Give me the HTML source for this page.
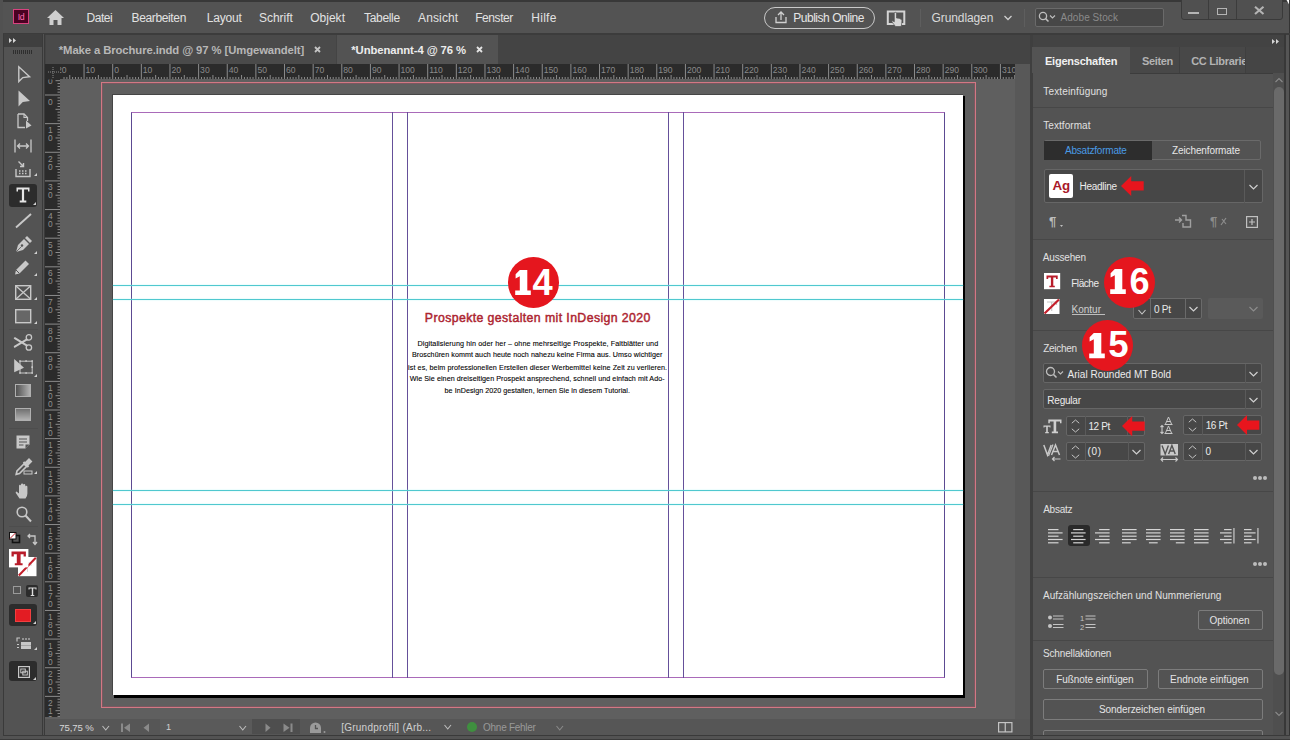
<!DOCTYPE html>
<html><head><meta charset="utf-8"><style>
html,body{margin:0;padding:0;}
body{width:1292px;height:740px;overflow:hidden;position:relative;background:#ffffff;font-family:"Liberation Sans",sans-serif;}
.r{position:absolute;}
.t{position:absolute;white-space:nowrap;}
svg.r{overflow:visible;}
</style></head><body>
<div class="r" style="left:0px;top:0px;width:1290px;height:740px;background:#535353;"></div>
<div class="r" style="left:0px;top:0px;width:1290px;height:2px;background:#383838;"></div>
<div class="r" style="left:0px;top:0px;width:3px;height:740px;background:#515151;"></div>
<div class="r" style="left:13px;top:9px;width:16px;height:15px;background:#4a0222;border:1px solid #d8427f;box-sizing:border-box;"></div>
<div class="t" style="left:17.80px;top:13.22px;font-size:8.78px;line-height:8.78px;color:#ff6fb0;font-weight:400;letter-spacing:-0.600px;">Id</div>
<svg class="r" style="left:46px;top:9px;" width="19" height="17" viewBox="0 0 19 17"><path d="M9.5 1 L18 9 L15.5 9 L15.5 16 L11.5 16 L11.5 11 L7.5 11 L7.5 16 L3.5 16 L3.5 9 L1 9 Z" fill="#cfcfcf"/></svg>
<div class="t" style="left:86.60px;top:11.69px;font-size:12px;line-height:12px;color:#e2e2e2;font-weight:400;letter-spacing:-0.500px;">Datei</div>
<div class="t" style="left:131.50px;top:11.69px;font-size:12px;line-height:12px;color:#e2e2e2;font-weight:400;letter-spacing:-0.356px;">Bearbeiten</div>
<div class="t" style="left:206.80px;top:11.69px;font-size:12px;line-height:12px;color:#e2e2e2;font-weight:400;letter-spacing:-0.220px;">Layout</div>
<div class="t" style="left:259.10px;top:11.69px;font-size:12px;line-height:12px;color:#e2e2e2;font-weight:400;letter-spacing:-0.050px;">Schrift</div>
<div class="t" style="left:310.20px;top:11.69px;font-size:12px;line-height:12px;color:#e2e2e2;font-weight:400;letter-spacing:0.020px;">Objekt</div>
<div class="t" style="left:364.00px;top:11.69px;font-size:12px;line-height:12px;color:#e2e2e2;font-weight:400;letter-spacing:-0.317px;">Tabelle</div>
<div class="t" style="left:418.00px;top:11.69px;font-size:12px;line-height:12px;color:#e2e2e2;font-weight:400;letter-spacing:0.133px;">Ansicht</div>
<div class="t" style="left:475.20px;top:11.69px;font-size:12px;line-height:12px;color:#e2e2e2;font-weight:400;letter-spacing:-0.433px;">Fenster</div>
<div class="t" style="left:531.30px;top:11.69px;font-size:12px;line-height:12px;color:#e2e2e2;font-weight:400;letter-spacing:0.250px;">Hilfe</div>
<div class="r" style="left:763.5px;top:6.5px;width:111.5px;height:22.0px;background:transparent;border:1px solid #c9c9c9;border-radius:11px;box-sizing:border-box;"></div>
<svg class="r" style="left:774px;top:10px;" width="14" height="14" viewBox="0 0 14 14"><path d="M2 7 V12.5 H12 V7" fill="none" stroke="#d0d0d0" stroke-width="1.3"/><path d="M7 10 V2.5 M4 5 L7 2 L10 5" fill="none" stroke="#d0d0d0" stroke-width="1.3"/></svg>
<div class="t" style="left:793.20px;top:11.69px;font-size:12px;line-height:12px;color:#e6e6e6;font-weight:400;letter-spacing:-0.469px;">Publish Online</div>
<svg class="r" style="left:886px;top:9.5px;" width="20" height="17" viewBox="0 0 20 17"><rect x="1.8" y="1.5" width="16.5" height="12.5" fill="none" stroke="#d4d4d4" stroke-width="2"/><path d="M9.5 16.5 L6 12 Q5.6 11 6.6 10.8 L8.3 11.8 V3.5 Q8.3 2.3 9.4 2.3 Q10.5 2.3 10.5 3.5 V8 Q13.5 8 15.2 9.3 Q16.2 10 15.9 12 L15.2 16.5 Z" fill="#d6d6d6" stroke="#535353" stroke-width="0.7"/></svg>
<div class="r" style="left:920px;top:9px;width:1px;height:18px;background:#5e5e5e;"></div>
<div class="t" style="left:931.60px;top:11.69px;font-size:12px;line-height:12px;color:#dadada;font-weight:400;letter-spacing:-0.111px;">Grundlagen</div>
<svg class="r" style="left:1003px;top:14px;" width="10" height="8" viewBox="0 0 10 8"><path d="M1.5 2 L5 5.5 L8.5 2" fill="none" stroke="#cfcfcf" stroke-width="1.3"/></svg>
<div class="r" style="left:1024px;top:9px;width:1px;height:18px;background:#5e5e5e;"></div>
<div class="r" style="left:1034.5px;top:7.5px;width:129.0px;height:19.0px;background:#474747;border:1px solid #6a6a6a;border-radius:2px;box-sizing:border-box;"></div>
<svg class="r" style="left:1038px;top:11px;" width="22" height="12" viewBox="0 0 22 12"><circle cx="5" cy="5" r="3.6" fill="none" stroke="#bfbfbf" stroke-width="1.3"/><path d="M7.6 7.6 L10.5 10.5" stroke="#bfbfbf" stroke-width="1.5"/><path d="M12 4.5 L14.5 7 L17 4.5" fill="none" stroke="#bfbfbf" stroke-width="1.1"/></svg>
<div class="t" style="left:1060.50px;top:12.88px;font-size:10px;line-height:10px;color:#8a8a8a;font-weight:400;letter-spacing:0.070px;">Adobe Stock</div>
<div class="r" style="left:1181px;top:-3px;width:102px;height:22.5px;background:#505050;border:1px solid #3a3a3a;border-radius:3px;box-sizing:border-box;"></div>
<div class="r" style="left:1207.5px;top:0px;width:1.0px;height:19px;background:#3c3c3c;"></div>
<div class="r" style="left:1236px;top:0px;width:1px;height:19px;background:#3c3c3c;"></div>
<div class="r" style="left:1188.4px;top:11.6px;width:11.0px;height:2.0px;background:#b4b4b4;"></div>
<div class="r" style="left:1216.8px;top:8px;width:10.600000000000136px;height:6.699999999999999px;background:transparent;border:1.6px solid #b4b4b4;box-sizing:border-box;"></div>
<svg class="r" style="left:1253.7px;top:5.9px;" width="10.5" height="8.8" viewBox="0 0 10.5 8.8"><path d="M1 0.8 L9.5 8 M9.5 0.8 L1 8" stroke="#b4b4b4" stroke-width="2.1"/></svg>
<div class="r" style="left:1290px;top:0px;width:2px;height:740px;background:#ffffff;"></div>
<svg class="r" style="left:1282px;top:0px;" width="10" height="6" viewBox="0 0 10 6"><path d="M4.5 0 H10 V6 H8 Z" fill="#ffffff"/></svg>
<div class="r" style="left:1285.8px;top:34px;width:3.2000000000000455px;height:706px;background:#555555;"></div>
<div class="r" style="left:1289px;top:0px;width:1px;height:740px;background:#333333;"></div>
<div class="r" style="left:3px;top:33px;width:1287px;height:2px;background:#3c3c3c;"></div>
<div class="r" style="left:3px;top:34px;width:40px;height:706px;background:#535353;"></div>
<div class="r" style="left:3px;top:34px;width:1px;height:701px;background:#3a3a3a;"></div>
<div class="r" style="left:42px;top:34px;width:1px;height:701px;background:#3a3a3a;"></div>
<div class="r" style="left:4px;top:33.6px;width:38px;height:13.0px;background:#3f3f3f;"></div>
<svg class="r" style="left:8px;top:37px;" width="9" height="7" viewBox="0 0 9 7"><path d="M1 1 L4 3.5 L1 6 Z M5 1 L8 3.5 L5 6 Z" fill="#d6d6d6"/></svg>
<div class="r" style="left:13px;top:50px;width:1px;height:4px;background:#2e2e2e;"></div>
<div class="r" style="left:15px;top:50px;width:1px;height:4px;background:#2e2e2e;"></div>
<div class="r" style="left:17px;top:50px;width:1px;height:4px;background:#2e2e2e;"></div>
<div class="r" style="left:19px;top:50px;width:1px;height:4px;background:#2e2e2e;"></div>
<div class="r" style="left:21px;top:50px;width:1px;height:4px;background:#2e2e2e;"></div>
<div class="r" style="left:23px;top:50px;width:1px;height:4px;background:#2e2e2e;"></div>
<div class="r" style="left:25px;top:50px;width:1px;height:4px;background:#2e2e2e;"></div>
<div class="r" style="left:27px;top:50px;width:1px;height:4px;background:#2e2e2e;"></div>
<div class="r" style="left:29px;top:50px;width:1px;height:4px;background:#2e2e2e;"></div>
<div class="r" style="left:31px;top:50px;width:1px;height:4px;background:#2e2e2e;"></div>
<div class="r" style="left:43px;top:34px;width:1px;height:706px;background:#535353;"></div>
<div class="r" style="left:44px;top:34px;width:1px;height:701px;background:#3a3a3a;"></div>
<div class="r" style="left:3px;top:735px;width:1287px;height:1px;background:#3a3a3a;"></div>
<div class="r" style="left:3px;top:736px;width:1287px;height:2.6000000000000227px;background:#535353;"></div>
<div class="r" style="left:0px;top:738.6px;width:1290px;height:1.3999999999999773px;background:#3a3a3a;"></div>
<div class="r" style="left:45px;top:35px;width:985px;height:28.5px;background:#444444;"></div>
<div class="r" style="left:45.5px;top:35px;width:290.5px;height:28.5px;background:#4a4a4a;"></div>
<div class="r" style="left:337px;top:35px;width:161px;height:28.5px;background:#535353;"></div>
<div class="t" style="left:58.80px;top:44.78px;font-size:11.3px;line-height:11.3px;color:#b7b7b7;font-weight:700;letter-spacing:-0.100px;">*Make a Brochure.indd @ 97 % [Umgewandelt]</div>
<svg class="r" style="left:313.5px;top:45.5px;" width="7" height="7" viewBox="0 0 7 7"><path d="M1 1 L6 6 M6 1 L1 6" stroke="#c4c4c4" stroke-width="1.8"/></svg>
<div class="t" style="left:351.30px;top:44.78px;font-size:11.3px;line-height:11.3px;color:#ececec;font-weight:700;letter-spacing:-0.094px;">*Unbenannt-4 @ 76 %</div>
<svg class="r" style="left:475.5px;top:45.5px;" width="7" height="7" viewBox="0 0 7 7"><path d="M1 1 L6 6 M6 1 L1 6" stroke="#e4e4e4" stroke-width="1.8"/></svg>
<div class="r" style="left:45px;top:63.5px;width:970px;height:655.5px;background:#5f5f5f;"></div>
<div class="r" style="left:1015px;top:63.5px;width:15px;height:655.5px;background:#585858;"></div>
<div class="r" style="left:1030px;top:35px;width:3px;height:705px;background:#3f3f3f;"></div>
<svg class="r" style="left:60px;top:63.5px;overflow:hidden;" width="955" height="15.5" viewBox="0 0 955 15.5"><rect x="0" y="0" width="955" height="15.5" fill="#2b2b2b"/><rect x="3.52" y="13.0" width="1" height="2.5" fill="#8c8c8c"/><rect x="6.38" y="13.0" width="1" height="2.5" fill="#8c8c8c"/><rect x="9.25" y="11.0" width="1" height="4.5" fill="#8c8c8c"/><rect x="12.11" y="13.0" width="1" height="2.5" fill="#8c8c8c"/><rect x="14.97" y="13.0" width="1" height="2.5" fill="#8c8c8c"/><rect x="17.84" y="13.0" width="1" height="2.5" fill="#8c8c8c"/><rect x="20.70" y="13.0" width="1" height="2.5" fill="#8c8c8c"/><rect x="23.56" y="0" width="1" height="15.5" fill="#8c8c8c"/><rect x="26.43" y="13.0" width="1" height="2.5" fill="#8c8c8c"/><rect x="29.29" y="13.0" width="1" height="2.5" fill="#8c8c8c"/><rect x="32.15" y="13.0" width="1" height="2.5" fill="#8c8c8c"/><rect x="35.02" y="13.0" width="1" height="2.5" fill="#8c8c8c"/><rect x="37.88" y="11.0" width="1" height="4.5" fill="#8c8c8c"/><rect x="40.75" y="13.0" width="1" height="2.5" fill="#8c8c8c"/><rect x="43.61" y="13.0" width="1" height="2.5" fill="#8c8c8c"/><rect x="46.47" y="13.0" width="1" height="2.5" fill="#8c8c8c"/><rect x="49.34" y="13.0" width="1" height="2.5" fill="#8c8c8c"/><rect x="52.20" y="0" width="1" height="15.5" fill="#8c8c8c"/><rect x="55.06" y="13.0" width="1" height="2.5" fill="#8c8c8c"/><rect x="57.93" y="13.0" width="1" height="2.5" fill="#8c8c8c"/><rect x="60.79" y="13.0" width="1" height="2.5" fill="#8c8c8c"/><rect x="63.65" y="13.0" width="1" height="2.5" fill="#8c8c8c"/><rect x="66.52" y="11.0" width="1" height="4.5" fill="#8c8c8c"/><rect x="69.38" y="13.0" width="1" height="2.5" fill="#8c8c8c"/><rect x="72.25" y="13.0" width="1" height="2.5" fill="#8c8c8c"/><rect x="75.11" y="13.0" width="1" height="2.5" fill="#8c8c8c"/><rect x="77.97" y="13.0" width="1" height="2.5" fill="#8c8c8c"/><rect x="80.84" y="0" width="1" height="15.5" fill="#8c8c8c"/><rect x="83.70" y="13.0" width="1" height="2.5" fill="#8c8c8c"/><rect x="86.56" y="13.0" width="1" height="2.5" fill="#8c8c8c"/><rect x="89.43" y="13.0" width="1" height="2.5" fill="#8c8c8c"/><rect x="92.29" y="13.0" width="1" height="2.5" fill="#8c8c8c"/><rect x="95.15" y="11.0" width="1" height="4.5" fill="#8c8c8c"/><rect x="98.02" y="13.0" width="1" height="2.5" fill="#8c8c8c"/><rect x="100.88" y="13.0" width="1" height="2.5" fill="#8c8c8c"/><rect x="103.74" y="13.0" width="1" height="2.5" fill="#8c8c8c"/><rect x="106.61" y="13.0" width="1" height="2.5" fill="#8c8c8c"/><rect x="109.47" y="0" width="1" height="15.5" fill="#8c8c8c"/><rect x="112.34" y="13.0" width="1" height="2.5" fill="#8c8c8c"/><rect x="115.20" y="13.0" width="1" height="2.5" fill="#8c8c8c"/><rect x="118.06" y="13.0" width="1" height="2.5" fill="#8c8c8c"/><rect x="120.93" y="13.0" width="1" height="2.5" fill="#8c8c8c"/><rect x="123.79" y="11.0" width="1" height="4.5" fill="#8c8c8c"/><rect x="126.65" y="13.0" width="1" height="2.5" fill="#8c8c8c"/><rect x="129.52" y="13.0" width="1" height="2.5" fill="#8c8c8c"/><rect x="132.38" y="13.0" width="1" height="2.5" fill="#8c8c8c"/><rect x="135.24" y="13.0" width="1" height="2.5" fill="#8c8c8c"/><rect x="138.11" y="0" width="1" height="15.5" fill="#8c8c8c"/><rect x="140.97" y="13.0" width="1" height="2.5" fill="#8c8c8c"/><rect x="143.84" y="13.0" width="1" height="2.5" fill="#8c8c8c"/><rect x="146.70" y="13.0" width="1" height="2.5" fill="#8c8c8c"/><rect x="149.56" y="13.0" width="1" height="2.5" fill="#8c8c8c"/><rect x="152.43" y="11.0" width="1" height="4.5" fill="#8c8c8c"/><rect x="155.29" y="13.0" width="1" height="2.5" fill="#8c8c8c"/><rect x="158.15" y="13.0" width="1" height="2.5" fill="#8c8c8c"/><rect x="161.02" y="13.0" width="1" height="2.5" fill="#8c8c8c"/><rect x="163.88" y="13.0" width="1" height="2.5" fill="#8c8c8c"/><rect x="166.74" y="0" width="1" height="15.5" fill="#8c8c8c"/><rect x="169.61" y="13.0" width="1" height="2.5" fill="#8c8c8c"/><rect x="172.47" y="13.0" width="1" height="2.5" fill="#8c8c8c"/><rect x="175.33" y="13.0" width="1" height="2.5" fill="#8c8c8c"/><rect x="178.20" y="13.0" width="1" height="2.5" fill="#8c8c8c"/><rect x="181.06" y="11.0" width="1" height="4.5" fill="#8c8c8c"/><rect x="183.93" y="13.0" width="1" height="2.5" fill="#8c8c8c"/><rect x="186.79" y="13.0" width="1" height="2.5" fill="#8c8c8c"/><rect x="189.65" y="13.0" width="1" height="2.5" fill="#8c8c8c"/><rect x="192.52" y="13.0" width="1" height="2.5" fill="#8c8c8c"/><rect x="195.38" y="0" width="1" height="15.5" fill="#8c8c8c"/><rect x="198.24" y="13.0" width="1" height="2.5" fill="#8c8c8c"/><rect x="201.11" y="13.0" width="1" height="2.5" fill="#8c8c8c"/><rect x="203.97" y="13.0" width="1" height="2.5" fill="#8c8c8c"/><rect x="206.83" y="13.0" width="1" height="2.5" fill="#8c8c8c"/><rect x="209.70" y="11.0" width="1" height="4.5" fill="#8c8c8c"/><rect x="212.56" y="13.0" width="1" height="2.5" fill="#8c8c8c"/><rect x="215.43" y="13.0" width="1" height="2.5" fill="#8c8c8c"/><rect x="218.29" y="13.0" width="1" height="2.5" fill="#8c8c8c"/><rect x="221.15" y="13.0" width="1" height="2.5" fill="#8c8c8c"/><rect x="224.02" y="0" width="1" height="15.5" fill="#8c8c8c"/><rect x="226.88" y="13.0" width="1" height="2.5" fill="#8c8c8c"/><rect x="229.74" y="13.0" width="1" height="2.5" fill="#8c8c8c"/><rect x="232.61" y="13.0" width="1" height="2.5" fill="#8c8c8c"/><rect x="235.47" y="13.0" width="1" height="2.5" fill="#8c8c8c"/><rect x="238.33" y="11.0" width="1" height="4.5" fill="#8c8c8c"/><rect x="241.20" y="13.0" width="1" height="2.5" fill="#8c8c8c"/><rect x="244.06" y="13.0" width="1" height="2.5" fill="#8c8c8c"/><rect x="246.92" y="13.0" width="1" height="2.5" fill="#8c8c8c"/><rect x="249.79" y="13.0" width="1" height="2.5" fill="#8c8c8c"/><rect x="252.65" y="0" width="1" height="15.5" fill="#8c8c8c"/><rect x="255.52" y="13.0" width="1" height="2.5" fill="#8c8c8c"/><rect x="258.38" y="13.0" width="1" height="2.5" fill="#8c8c8c"/><rect x="261.24" y="13.0" width="1" height="2.5" fill="#8c8c8c"/><rect x="264.11" y="13.0" width="1" height="2.5" fill="#8c8c8c"/><rect x="266.97" y="11.0" width="1" height="4.5" fill="#8c8c8c"/><rect x="269.83" y="13.0" width="1" height="2.5" fill="#8c8c8c"/><rect x="272.70" y="13.0" width="1" height="2.5" fill="#8c8c8c"/><rect x="275.56" y="13.0" width="1" height="2.5" fill="#8c8c8c"/><rect x="278.42" y="13.0" width="1" height="2.5" fill="#8c8c8c"/><rect x="281.29" y="0" width="1" height="15.5" fill="#8c8c8c"/><rect x="284.15" y="13.0" width="1" height="2.5" fill="#8c8c8c"/><rect x="287.02" y="13.0" width="1" height="2.5" fill="#8c8c8c"/><rect x="289.88" y="13.0" width="1" height="2.5" fill="#8c8c8c"/><rect x="292.74" y="13.0" width="1" height="2.5" fill="#8c8c8c"/><rect x="295.61" y="11.0" width="1" height="4.5" fill="#8c8c8c"/><rect x="298.47" y="13.0" width="1" height="2.5" fill="#8c8c8c"/><rect x="301.33" y="13.0" width="1" height="2.5" fill="#8c8c8c"/><rect x="304.20" y="13.0" width="1" height="2.5" fill="#8c8c8c"/><rect x="307.06" y="13.0" width="1" height="2.5" fill="#8c8c8c"/><rect x="309.92" y="0" width="1" height="15.5" fill="#8c8c8c"/><rect x="312.79" y="13.0" width="1" height="2.5" fill="#8c8c8c"/><rect x="315.65" y="13.0" width="1" height="2.5" fill="#8c8c8c"/><rect x="318.51" y="13.0" width="1" height="2.5" fill="#8c8c8c"/><rect x="321.38" y="13.0" width="1" height="2.5" fill="#8c8c8c"/><rect x="324.24" y="11.0" width="1" height="4.5" fill="#8c8c8c"/><rect x="327.11" y="13.0" width="1" height="2.5" fill="#8c8c8c"/><rect x="329.97" y="13.0" width="1" height="2.5" fill="#8c8c8c"/><rect x="332.83" y="13.0" width="1" height="2.5" fill="#8c8c8c"/><rect x="335.70" y="13.0" width="1" height="2.5" fill="#8c8c8c"/><rect x="338.56" y="0" width="1" height="15.5" fill="#8c8c8c"/><rect x="341.42" y="13.0" width="1" height="2.5" fill="#8c8c8c"/><rect x="344.29" y="13.0" width="1" height="2.5" fill="#8c8c8c"/><rect x="347.15" y="13.0" width="1" height="2.5" fill="#8c8c8c"/><rect x="350.01" y="13.0" width="1" height="2.5" fill="#8c8c8c"/><rect x="352.88" y="11.0" width="1" height="4.5" fill="#8c8c8c"/><rect x="355.74" y="13.0" width="1" height="2.5" fill="#8c8c8c"/><rect x="358.61" y="13.0" width="1" height="2.5" fill="#8c8c8c"/><rect x="361.47" y="13.0" width="1" height="2.5" fill="#8c8c8c"/><rect x="364.33" y="13.0" width="1" height="2.5" fill="#8c8c8c"/><rect x="367.20" y="0" width="1" height="15.5" fill="#8c8c8c"/><rect x="370.06" y="13.0" width="1" height="2.5" fill="#8c8c8c"/><rect x="372.92" y="13.0" width="1" height="2.5" fill="#8c8c8c"/><rect x="375.79" y="13.0" width="1" height="2.5" fill="#8c8c8c"/><rect x="378.65" y="13.0" width="1" height="2.5" fill="#8c8c8c"/><rect x="381.51" y="11.0" width="1" height="4.5" fill="#8c8c8c"/><rect x="384.38" y="13.0" width="1" height="2.5" fill="#8c8c8c"/><rect x="387.24" y="13.0" width="1" height="2.5" fill="#8c8c8c"/><rect x="390.10" y="13.0" width="1" height="2.5" fill="#8c8c8c"/><rect x="392.97" y="13.0" width="1" height="2.5" fill="#8c8c8c"/><rect x="395.83" y="0" width="1" height="15.5" fill="#8c8c8c"/><rect x="398.70" y="13.0" width="1" height="2.5" fill="#8c8c8c"/><rect x="401.56" y="13.0" width="1" height="2.5" fill="#8c8c8c"/><rect x="404.42" y="13.0" width="1" height="2.5" fill="#8c8c8c"/><rect x="407.29" y="13.0" width="1" height="2.5" fill="#8c8c8c"/><rect x="410.15" y="11.0" width="1" height="4.5" fill="#8c8c8c"/><rect x="413.01" y="13.0" width="1" height="2.5" fill="#8c8c8c"/><rect x="415.88" y="13.0" width="1" height="2.5" fill="#8c8c8c"/><rect x="418.74" y="13.0" width="1" height="2.5" fill="#8c8c8c"/><rect x="421.60" y="13.0" width="1" height="2.5" fill="#8c8c8c"/><rect x="424.47" y="0" width="1" height="15.5" fill="#8c8c8c"/><rect x="427.33" y="13.0" width="1" height="2.5" fill="#8c8c8c"/><rect x="430.20" y="13.0" width="1" height="2.5" fill="#8c8c8c"/><rect x="433.06" y="13.0" width="1" height="2.5" fill="#8c8c8c"/><rect x="435.92" y="13.0" width="1" height="2.5" fill="#8c8c8c"/><rect x="438.79" y="11.0" width="1" height="4.5" fill="#8c8c8c"/><rect x="441.65" y="13.0" width="1" height="2.5" fill="#8c8c8c"/><rect x="444.51" y="13.0" width="1" height="2.5" fill="#8c8c8c"/><rect x="447.38" y="13.0" width="1" height="2.5" fill="#8c8c8c"/><rect x="450.24" y="13.0" width="1" height="2.5" fill="#8c8c8c"/><rect x="453.10" y="0" width="1" height="15.5" fill="#8c8c8c"/><rect x="455.97" y="13.0" width="1" height="2.5" fill="#8c8c8c"/><rect x="458.83" y="13.0" width="1" height="2.5" fill="#8c8c8c"/><rect x="461.69" y="13.0" width="1" height="2.5" fill="#8c8c8c"/><rect x="464.56" y="13.0" width="1" height="2.5" fill="#8c8c8c"/><rect x="467.42" y="11.0" width="1" height="4.5" fill="#8c8c8c"/><rect x="470.29" y="13.0" width="1" height="2.5" fill="#8c8c8c"/><rect x="473.15" y="13.0" width="1" height="2.5" fill="#8c8c8c"/><rect x="476.01" y="13.0" width="1" height="2.5" fill="#8c8c8c"/><rect x="478.88" y="13.0" width="1" height="2.5" fill="#8c8c8c"/><rect x="481.74" y="0" width="1" height="15.5" fill="#8c8c8c"/><rect x="484.60" y="13.0" width="1" height="2.5" fill="#8c8c8c"/><rect x="487.47" y="13.0" width="1" height="2.5" fill="#8c8c8c"/><rect x="490.33" y="13.0" width="1" height="2.5" fill="#8c8c8c"/><rect x="493.19" y="13.0" width="1" height="2.5" fill="#8c8c8c"/><rect x="496.06" y="11.0" width="1" height="4.5" fill="#8c8c8c"/><rect x="498.92" y="13.0" width="1" height="2.5" fill="#8c8c8c"/><rect x="501.79" y="13.0" width="1" height="2.5" fill="#8c8c8c"/><rect x="504.65" y="13.0" width="1" height="2.5" fill="#8c8c8c"/><rect x="507.51" y="13.0" width="1" height="2.5" fill="#8c8c8c"/><rect x="510.38" y="0" width="1" height="15.5" fill="#8c8c8c"/><rect x="513.24" y="13.0" width="1" height="2.5" fill="#8c8c8c"/><rect x="516.10" y="13.0" width="1" height="2.5" fill="#8c8c8c"/><rect x="518.97" y="13.0" width="1" height="2.5" fill="#8c8c8c"/><rect x="521.83" y="13.0" width="1" height="2.5" fill="#8c8c8c"/><rect x="524.69" y="11.0" width="1" height="4.5" fill="#8c8c8c"/><rect x="527.56" y="13.0" width="1" height="2.5" fill="#8c8c8c"/><rect x="530.42" y="13.0" width="1" height="2.5" fill="#8c8c8c"/><rect x="533.28" y="13.0" width="1" height="2.5" fill="#8c8c8c"/><rect x="536.15" y="13.0" width="1" height="2.5" fill="#8c8c8c"/><rect x="539.01" y="0" width="1" height="15.5" fill="#8c8c8c"/><rect x="541.88" y="13.0" width="1" height="2.5" fill="#8c8c8c"/><rect x="544.74" y="13.0" width="1" height="2.5" fill="#8c8c8c"/><rect x="547.60" y="13.0" width="1" height="2.5" fill="#8c8c8c"/><rect x="550.47" y="13.0" width="1" height="2.5" fill="#8c8c8c"/><rect x="553.33" y="11.0" width="1" height="4.5" fill="#8c8c8c"/><rect x="556.19" y="13.0" width="1" height="2.5" fill="#8c8c8c"/><rect x="559.06" y="13.0" width="1" height="2.5" fill="#8c8c8c"/><rect x="561.92" y="13.0" width="1" height="2.5" fill="#8c8c8c"/><rect x="564.78" y="13.0" width="1" height="2.5" fill="#8c8c8c"/><rect x="567.65" y="0" width="1" height="15.5" fill="#8c8c8c"/><rect x="570.51" y="13.0" width="1" height="2.5" fill="#8c8c8c"/><rect x="573.38" y="13.0" width="1" height="2.5" fill="#8c8c8c"/><rect x="576.24" y="13.0" width="1" height="2.5" fill="#8c8c8c"/><rect x="579.10" y="13.0" width="1" height="2.5" fill="#8c8c8c"/><rect x="581.97" y="11.0" width="1" height="4.5" fill="#8c8c8c"/><rect x="584.83" y="13.0" width="1" height="2.5" fill="#8c8c8c"/><rect x="587.69" y="13.0" width="1" height="2.5" fill="#8c8c8c"/><rect x="590.56" y="13.0" width="1" height="2.5" fill="#8c8c8c"/><rect x="593.42" y="13.0" width="1" height="2.5" fill="#8c8c8c"/><rect x="596.28" y="0" width="1" height="15.5" fill="#8c8c8c"/><rect x="599.15" y="13.0" width="1" height="2.5" fill="#8c8c8c"/><rect x="602.01" y="13.0" width="1" height="2.5" fill="#8c8c8c"/><rect x="604.87" y="13.0" width="1" height="2.5" fill="#8c8c8c"/><rect x="607.74" y="13.0" width="1" height="2.5" fill="#8c8c8c"/><rect x="610.60" y="11.0" width="1" height="4.5" fill="#8c8c8c"/><rect x="613.47" y="13.0" width="1" height="2.5" fill="#8c8c8c"/><rect x="616.33" y="13.0" width="1" height="2.5" fill="#8c8c8c"/><rect x="619.19" y="13.0" width="1" height="2.5" fill="#8c8c8c"/><rect x="622.06" y="13.0" width="1" height="2.5" fill="#8c8c8c"/><rect x="624.92" y="0" width="1" height="15.5" fill="#8c8c8c"/><rect x="627.78" y="13.0" width="1" height="2.5" fill="#8c8c8c"/><rect x="630.65" y="13.0" width="1" height="2.5" fill="#8c8c8c"/><rect x="633.51" y="13.0" width="1" height="2.5" fill="#8c8c8c"/><rect x="636.37" y="13.0" width="1" height="2.5" fill="#8c8c8c"/><rect x="639.24" y="11.0" width="1" height="4.5" fill="#8c8c8c"/><rect x="642.10" y="13.0" width="1" height="2.5" fill="#8c8c8c"/><rect x="644.97" y="13.0" width="1" height="2.5" fill="#8c8c8c"/><rect x="647.83" y="13.0" width="1" height="2.5" fill="#8c8c8c"/><rect x="650.69" y="13.0" width="1" height="2.5" fill="#8c8c8c"/><rect x="653.56" y="0" width="1" height="15.5" fill="#8c8c8c"/><rect x="656.42" y="13.0" width="1" height="2.5" fill="#8c8c8c"/><rect x="659.28" y="13.0" width="1" height="2.5" fill="#8c8c8c"/><rect x="662.15" y="13.0" width="1" height="2.5" fill="#8c8c8c"/><rect x="665.01" y="13.0" width="1" height="2.5" fill="#8c8c8c"/><rect x="667.87" y="11.0" width="1" height="4.5" fill="#8c8c8c"/><rect x="670.74" y="13.0" width="1" height="2.5" fill="#8c8c8c"/><rect x="673.60" y="13.0" width="1" height="2.5" fill="#8c8c8c"/><rect x="676.46" y="13.0" width="1" height="2.5" fill="#8c8c8c"/><rect x="679.33" y="13.0" width="1" height="2.5" fill="#8c8c8c"/><rect x="682.19" y="0" width="1" height="15.5" fill="#8c8c8c"/><rect x="685.06" y="13.0" width="1" height="2.5" fill="#8c8c8c"/><rect x="687.92" y="13.0" width="1" height="2.5" fill="#8c8c8c"/><rect x="690.78" y="13.0" width="1" height="2.5" fill="#8c8c8c"/><rect x="693.65" y="13.0" width="1" height="2.5" fill="#8c8c8c"/><rect x="696.51" y="11.0" width="1" height="4.5" fill="#8c8c8c"/><rect x="699.37" y="13.0" width="1" height="2.5" fill="#8c8c8c"/><rect x="702.24" y="13.0" width="1" height="2.5" fill="#8c8c8c"/><rect x="705.10" y="13.0" width="1" height="2.5" fill="#8c8c8c"/><rect x="707.96" y="13.0" width="1" height="2.5" fill="#8c8c8c"/><rect x="710.83" y="0" width="1" height="15.5" fill="#8c8c8c"/><rect x="713.69" y="13.0" width="1" height="2.5" fill="#8c8c8c"/><rect x="716.56" y="13.0" width="1" height="2.5" fill="#8c8c8c"/><rect x="719.42" y="13.0" width="1" height="2.5" fill="#8c8c8c"/><rect x="722.28" y="13.0" width="1" height="2.5" fill="#8c8c8c"/><rect x="725.15" y="11.0" width="1" height="4.5" fill="#8c8c8c"/><rect x="728.01" y="13.0" width="1" height="2.5" fill="#8c8c8c"/><rect x="730.87" y="13.0" width="1" height="2.5" fill="#8c8c8c"/><rect x="733.74" y="13.0" width="1" height="2.5" fill="#8c8c8c"/><rect x="736.60" y="13.0" width="1" height="2.5" fill="#8c8c8c"/><rect x="739.46" y="0" width="1" height="15.5" fill="#8c8c8c"/><rect x="742.33" y="13.0" width="1" height="2.5" fill="#8c8c8c"/><rect x="745.19" y="13.0" width="1" height="2.5" fill="#8c8c8c"/><rect x="748.05" y="13.0" width="1" height="2.5" fill="#8c8c8c"/><rect x="750.92" y="13.0" width="1" height="2.5" fill="#8c8c8c"/><rect x="753.78" y="11.0" width="1" height="4.5" fill="#8c8c8c"/><rect x="756.65" y="13.0" width="1" height="2.5" fill="#8c8c8c"/><rect x="759.51" y="13.0" width="1" height="2.5" fill="#8c8c8c"/><rect x="762.37" y="13.0" width="1" height="2.5" fill="#8c8c8c"/><rect x="765.24" y="13.0" width="1" height="2.5" fill="#8c8c8c"/><rect x="768.10" y="0" width="1" height="15.5" fill="#8c8c8c"/><rect x="770.96" y="13.0" width="1" height="2.5" fill="#8c8c8c"/><rect x="773.83" y="13.0" width="1" height="2.5" fill="#8c8c8c"/><rect x="776.69" y="13.0" width="1" height="2.5" fill="#8c8c8c"/><rect x="779.55" y="13.0" width="1" height="2.5" fill="#8c8c8c"/><rect x="782.42" y="11.0" width="1" height="4.5" fill="#8c8c8c"/><rect x="785.28" y="13.0" width="1" height="2.5" fill="#8c8c8c"/><rect x="788.15" y="13.0" width="1" height="2.5" fill="#8c8c8c"/><rect x="791.01" y="13.0" width="1" height="2.5" fill="#8c8c8c"/><rect x="793.87" y="13.0" width="1" height="2.5" fill="#8c8c8c"/><rect x="796.74" y="0" width="1" height="15.5" fill="#8c8c8c"/><rect x="799.60" y="13.0" width="1" height="2.5" fill="#8c8c8c"/><rect x="802.46" y="13.0" width="1" height="2.5" fill="#8c8c8c"/><rect x="805.33" y="13.0" width="1" height="2.5" fill="#8c8c8c"/><rect x="808.19" y="13.0" width="1" height="2.5" fill="#8c8c8c"/><rect x="811.05" y="11.0" width="1" height="4.5" fill="#8c8c8c"/><rect x="813.92" y="13.0" width="1" height="2.5" fill="#8c8c8c"/><rect x="816.78" y="13.0" width="1" height="2.5" fill="#8c8c8c"/><rect x="819.64" y="13.0" width="1" height="2.5" fill="#8c8c8c"/><rect x="822.51" y="13.0" width="1" height="2.5" fill="#8c8c8c"/><rect x="825.37" y="0" width="1" height="15.5" fill="#8c8c8c"/><rect x="828.24" y="13.0" width="1" height="2.5" fill="#8c8c8c"/><rect x="831.10" y="13.0" width="1" height="2.5" fill="#8c8c8c"/><rect x="833.96" y="13.0" width="1" height="2.5" fill="#8c8c8c"/><rect x="836.83" y="13.0" width="1" height="2.5" fill="#8c8c8c"/><rect x="839.69" y="11.0" width="1" height="4.5" fill="#8c8c8c"/><rect x="842.55" y="13.0" width="1" height="2.5" fill="#8c8c8c"/><rect x="845.42" y="13.0" width="1" height="2.5" fill="#8c8c8c"/><rect x="848.28" y="13.0" width="1" height="2.5" fill="#8c8c8c"/><rect x="851.14" y="13.0" width="1" height="2.5" fill="#8c8c8c"/><rect x="854.01" y="0" width="1" height="15.5" fill="#8c8c8c"/><rect x="856.87" y="13.0" width="1" height="2.5" fill="#8c8c8c"/><rect x="859.74" y="13.0" width="1" height="2.5" fill="#8c8c8c"/><rect x="862.60" y="13.0" width="1" height="2.5" fill="#8c8c8c"/><rect x="865.46" y="13.0" width="1" height="2.5" fill="#8c8c8c"/><rect x="868.33" y="11.0" width="1" height="4.5" fill="#8c8c8c"/><rect x="871.19" y="13.0" width="1" height="2.5" fill="#8c8c8c"/><rect x="874.05" y="13.0" width="1" height="2.5" fill="#8c8c8c"/><rect x="876.92" y="13.0" width="1" height="2.5" fill="#8c8c8c"/><rect x="879.78" y="13.0" width="1" height="2.5" fill="#8c8c8c"/><rect x="882.64" y="0" width="1" height="15.5" fill="#8c8c8c"/><rect x="885.51" y="13.0" width="1" height="2.5" fill="#8c8c8c"/><rect x="888.37" y="13.0" width="1" height="2.5" fill="#8c8c8c"/><rect x="891.23" y="13.0" width="1" height="2.5" fill="#8c8c8c"/><rect x="894.10" y="13.0" width="1" height="2.5" fill="#8c8c8c"/><rect x="896.96" y="11.0" width="1" height="4.5" fill="#8c8c8c"/><rect x="899.83" y="13.0" width="1" height="2.5" fill="#8c8c8c"/><rect x="902.69" y="13.0" width="1" height="2.5" fill="#8c8c8c"/><rect x="905.55" y="13.0" width="1" height="2.5" fill="#8c8c8c"/><rect x="908.42" y="13.0" width="1" height="2.5" fill="#8c8c8c"/><rect x="911.28" y="0" width="1" height="15.5" fill="#8c8c8c"/><rect x="914.14" y="13.0" width="1" height="2.5" fill="#8c8c8c"/><rect x="917.01" y="13.0" width="1" height="2.5" fill="#8c8c8c"/><rect x="919.87" y="13.0" width="1" height="2.5" fill="#8c8c8c"/><rect x="922.73" y="13.0" width="1" height="2.5" fill="#8c8c8c"/><rect x="925.60" y="11.0" width="1" height="4.5" fill="#8c8c8c"/><rect x="928.46" y="13.0" width="1" height="2.5" fill="#8c8c8c"/><rect x="931.33" y="13.0" width="1" height="2.5" fill="#8c8c8c"/><rect x="934.19" y="13.0" width="1" height="2.5" fill="#8c8c8c"/><rect x="937.05" y="13.0" width="1" height="2.5" fill="#8c8c8c"/><rect x="939.92" y="0" width="1" height="15.5" fill="#8c8c8c"/><rect x="942.78" y="13.0" width="1" height="2.5" fill="#8c8c8c"/><rect x="945.64" y="13.0" width="1" height="2.5" fill="#8c8c8c"/><rect x="948.51" y="13.0" width="1" height="2.5" fill="#8c8c8c"/><rect x="951.37" y="13.0" width="1" height="2.5" fill="#8c8c8c"/><rect x="954.23" y="11.0" width="1" height="4.5" fill="#8c8c8c"/><text x="-3.07" y="9.2" font-size="8.6" fill="#8a8a8a" font-family="Liberation Sans">20</text><text x="25.56" y="9.2" font-size="8.6" fill="#8a8a8a" font-family="Liberation Sans">10</text><text x="54.20" y="9.2" font-size="8.6" fill="#8a8a8a" font-family="Liberation Sans">0</text><text x="82.84" y="9.2" font-size="8.6" fill="#8a8a8a" font-family="Liberation Sans">10</text><text x="111.47" y="9.2" font-size="8.6" fill="#8a8a8a" font-family="Liberation Sans">20</text><text x="140.11" y="9.2" font-size="8.6" fill="#8a8a8a" font-family="Liberation Sans">30</text><text x="168.74" y="9.2" font-size="8.6" fill="#8a8a8a" font-family="Liberation Sans">40</text><text x="197.38" y="9.2" font-size="8.6" fill="#8a8a8a" font-family="Liberation Sans">50</text><text x="226.02" y="9.2" font-size="8.6" fill="#8a8a8a" font-family="Liberation Sans">60</text><text x="254.65" y="9.2" font-size="8.6" fill="#8a8a8a" font-family="Liberation Sans">70</text><text x="283.29" y="9.2" font-size="8.6" fill="#8a8a8a" font-family="Liberation Sans">80</text><text x="311.92" y="9.2" font-size="8.6" fill="#8a8a8a" font-family="Liberation Sans">90</text><text x="340.56" y="9.2" font-size="8.6" fill="#8a8a8a" font-family="Liberation Sans">100</text><text x="369.20" y="9.2" font-size="8.6" fill="#8a8a8a" font-family="Liberation Sans">110</text><text x="397.83" y="9.2" font-size="8.6" fill="#8a8a8a" font-family="Liberation Sans">120</text><text x="426.47" y="9.2" font-size="8.6" fill="#8a8a8a" font-family="Liberation Sans">130</text><text x="455.10" y="9.2" font-size="8.6" fill="#8a8a8a" font-family="Liberation Sans">140</text><text x="483.74" y="9.2" font-size="8.6" fill="#8a8a8a" font-family="Liberation Sans">150</text><text x="512.38" y="9.2" font-size="8.6" fill="#8a8a8a" font-family="Liberation Sans">160</text><text x="541.01" y="9.2" font-size="8.6" fill="#8a8a8a" font-family="Liberation Sans">170</text><text x="569.65" y="9.2" font-size="8.6" fill="#8a8a8a" font-family="Liberation Sans">180</text><text x="598.28" y="9.2" font-size="8.6" fill="#8a8a8a" font-family="Liberation Sans">190</text><text x="626.92" y="9.2" font-size="8.6" fill="#8a8a8a" font-family="Liberation Sans">200</text><text x="655.56" y="9.2" font-size="8.6" fill="#8a8a8a" font-family="Liberation Sans">210</text><text x="684.19" y="9.2" font-size="8.6" fill="#8a8a8a" font-family="Liberation Sans">220</text><text x="712.83" y="9.2" font-size="8.6" fill="#8a8a8a" font-family="Liberation Sans">230</text><text x="741.46" y="9.2" font-size="8.6" fill="#8a8a8a" font-family="Liberation Sans">240</text><text x="770.10" y="9.2" font-size="8.6" fill="#8a8a8a" font-family="Liberation Sans">250</text><text x="798.74" y="9.2" font-size="8.6" fill="#8a8a8a" font-family="Liberation Sans">260</text><text x="827.37" y="9.2" font-size="8.6" fill="#8a8a8a" font-family="Liberation Sans">270</text><text x="856.01" y="9.2" font-size="8.6" fill="#8a8a8a" font-family="Liberation Sans">280</text><text x="884.64" y="9.2" font-size="8.6" fill="#8a8a8a" font-family="Liberation Sans">290</text><text x="913.28" y="9.2" font-size="8.6" fill="#8a8a8a" font-family="Liberation Sans">300</text><text x="941.92" y="9.2" font-size="8.6" fill="#8a8a8a" font-family="Liberation Sans">310</text></svg>
<svg class="r" style="left:45px;top:79px;overflow:hidden;" width="15" height="638" viewBox="0 0 15 638"><rect x="0" y="0" width="15" height="639" fill="#2b2b2b"/><rect x="10.5" y="1.18" width="4.5" height="1" fill="#8c8c8c"/><rect x="12.5" y="4.05" width="2.5" height="1" fill="#8c8c8c"/><rect x="12.5" y="6.91" width="2.5" height="1" fill="#8c8c8c"/><rect x="12.5" y="9.77" width="2.5" height="1" fill="#8c8c8c"/><rect x="12.5" y="12.64" width="2.5" height="1" fill="#8c8c8c"/><rect x="0" y="15.50" width="15" height="1" fill="#8c8c8c"/><rect x="12.5" y="18.36" width="2.5" height="1" fill="#8c8c8c"/><rect x="12.5" y="21.23" width="2.5" height="1" fill="#8c8c8c"/><rect x="12.5" y="24.09" width="2.5" height="1" fill="#8c8c8c"/><rect x="12.5" y="26.95" width="2.5" height="1" fill="#8c8c8c"/><rect x="10.5" y="29.82" width="4.5" height="1" fill="#8c8c8c"/><rect x="12.5" y="32.68" width="2.5" height="1" fill="#8c8c8c"/><rect x="12.5" y="35.55" width="2.5" height="1" fill="#8c8c8c"/><rect x="12.5" y="38.41" width="2.5" height="1" fill="#8c8c8c"/><rect x="12.5" y="41.27" width="2.5" height="1" fill="#8c8c8c"/><rect x="0" y="44.14" width="15" height="1" fill="#8c8c8c"/><rect x="12.5" y="47.00" width="2.5" height="1" fill="#8c8c8c"/><rect x="12.5" y="49.86" width="2.5" height="1" fill="#8c8c8c"/><rect x="12.5" y="52.73" width="2.5" height="1" fill="#8c8c8c"/><rect x="12.5" y="55.59" width="2.5" height="1" fill="#8c8c8c"/><rect x="10.5" y="58.45" width="4.5" height="1" fill="#8c8c8c"/><rect x="12.5" y="61.32" width="2.5" height="1" fill="#8c8c8c"/><rect x="12.5" y="64.18" width="2.5" height="1" fill="#8c8c8c"/><rect x="12.5" y="67.04" width="2.5" height="1" fill="#8c8c8c"/><rect x="12.5" y="69.91" width="2.5" height="1" fill="#8c8c8c"/><rect x="0" y="72.77" width="15" height="1" fill="#8c8c8c"/><rect x="12.5" y="75.64" width="2.5" height="1" fill="#8c8c8c"/><rect x="12.5" y="78.50" width="2.5" height="1" fill="#8c8c8c"/><rect x="12.5" y="81.36" width="2.5" height="1" fill="#8c8c8c"/><rect x="12.5" y="84.23" width="2.5" height="1" fill="#8c8c8c"/><rect x="10.5" y="87.09" width="4.5" height="1" fill="#8c8c8c"/><rect x="12.5" y="89.95" width="2.5" height="1" fill="#8c8c8c"/><rect x="12.5" y="92.82" width="2.5" height="1" fill="#8c8c8c"/><rect x="12.5" y="95.68" width="2.5" height="1" fill="#8c8c8c"/><rect x="12.5" y="98.54" width="2.5" height="1" fill="#8c8c8c"/><rect x="0" y="101.41" width="15" height="1" fill="#8c8c8c"/><rect x="12.5" y="104.27" width="2.5" height="1" fill="#8c8c8c"/><rect x="12.5" y="107.14" width="2.5" height="1" fill="#8c8c8c"/><rect x="12.5" y="110.00" width="2.5" height="1" fill="#8c8c8c"/><rect x="12.5" y="112.86" width="2.5" height="1" fill="#8c8c8c"/><rect x="10.5" y="115.73" width="4.5" height="1" fill="#8c8c8c"/><rect x="12.5" y="118.59" width="2.5" height="1" fill="#8c8c8c"/><rect x="12.5" y="121.45" width="2.5" height="1" fill="#8c8c8c"/><rect x="12.5" y="124.32" width="2.5" height="1" fill="#8c8c8c"/><rect x="12.5" y="127.18" width="2.5" height="1" fill="#8c8c8c"/><rect x="0" y="130.04" width="15" height="1" fill="#8c8c8c"/><rect x="12.5" y="132.91" width="2.5" height="1" fill="#8c8c8c"/><rect x="12.5" y="135.77" width="2.5" height="1" fill="#8c8c8c"/><rect x="12.5" y="138.63" width="2.5" height="1" fill="#8c8c8c"/><rect x="12.5" y="141.50" width="2.5" height="1" fill="#8c8c8c"/><rect x="10.5" y="144.36" width="4.5" height="1" fill="#8c8c8c"/><rect x="12.5" y="147.23" width="2.5" height="1" fill="#8c8c8c"/><rect x="12.5" y="150.09" width="2.5" height="1" fill="#8c8c8c"/><rect x="12.5" y="152.95" width="2.5" height="1" fill="#8c8c8c"/><rect x="12.5" y="155.82" width="2.5" height="1" fill="#8c8c8c"/><rect x="0" y="158.68" width="15" height="1" fill="#8c8c8c"/><rect x="12.5" y="161.54" width="2.5" height="1" fill="#8c8c8c"/><rect x="12.5" y="164.41" width="2.5" height="1" fill="#8c8c8c"/><rect x="12.5" y="167.27" width="2.5" height="1" fill="#8c8c8c"/><rect x="12.5" y="170.13" width="2.5" height="1" fill="#8c8c8c"/><rect x="10.5" y="173.00" width="4.5" height="1" fill="#8c8c8c"/><rect x="12.5" y="175.86" width="2.5" height="1" fill="#8c8c8c"/><rect x="12.5" y="178.73" width="2.5" height="1" fill="#8c8c8c"/><rect x="12.5" y="181.59" width="2.5" height="1" fill="#8c8c8c"/><rect x="12.5" y="184.45" width="2.5" height="1" fill="#8c8c8c"/><rect x="0" y="187.32" width="15" height="1" fill="#8c8c8c"/><rect x="12.5" y="190.18" width="2.5" height="1" fill="#8c8c8c"/><rect x="12.5" y="193.04" width="2.5" height="1" fill="#8c8c8c"/><rect x="12.5" y="195.91" width="2.5" height="1" fill="#8c8c8c"/><rect x="12.5" y="198.77" width="2.5" height="1" fill="#8c8c8c"/><rect x="10.5" y="201.63" width="4.5" height="1" fill="#8c8c8c"/><rect x="12.5" y="204.50" width="2.5" height="1" fill="#8c8c8c"/><rect x="12.5" y="207.36" width="2.5" height="1" fill="#8c8c8c"/><rect x="12.5" y="210.22" width="2.5" height="1" fill="#8c8c8c"/><rect x="12.5" y="213.09" width="2.5" height="1" fill="#8c8c8c"/><rect x="0" y="215.95" width="15" height="1" fill="#8c8c8c"/><rect x="12.5" y="218.82" width="2.5" height="1" fill="#8c8c8c"/><rect x="12.5" y="221.68" width="2.5" height="1" fill="#8c8c8c"/><rect x="12.5" y="224.54" width="2.5" height="1" fill="#8c8c8c"/><rect x="12.5" y="227.41" width="2.5" height="1" fill="#8c8c8c"/><rect x="10.5" y="230.27" width="4.5" height="1" fill="#8c8c8c"/><rect x="12.5" y="233.13" width="2.5" height="1" fill="#8c8c8c"/><rect x="12.5" y="236.00" width="2.5" height="1" fill="#8c8c8c"/><rect x="12.5" y="238.86" width="2.5" height="1" fill="#8c8c8c"/><rect x="12.5" y="241.72" width="2.5" height="1" fill="#8c8c8c"/><rect x="0" y="244.59" width="15" height="1" fill="#8c8c8c"/><rect x="12.5" y="247.45" width="2.5" height="1" fill="#8c8c8c"/><rect x="12.5" y="250.32" width="2.5" height="1" fill="#8c8c8c"/><rect x="12.5" y="253.18" width="2.5" height="1" fill="#8c8c8c"/><rect x="12.5" y="256.04" width="2.5" height="1" fill="#8c8c8c"/><rect x="10.5" y="258.91" width="4.5" height="1" fill="#8c8c8c"/><rect x="12.5" y="261.77" width="2.5" height="1" fill="#8c8c8c"/><rect x="12.5" y="264.63" width="2.5" height="1" fill="#8c8c8c"/><rect x="12.5" y="267.50" width="2.5" height="1" fill="#8c8c8c"/><rect x="12.5" y="270.36" width="2.5" height="1" fill="#8c8c8c"/><rect x="0" y="273.22" width="15" height="1" fill="#8c8c8c"/><rect x="12.5" y="276.09" width="2.5" height="1" fill="#8c8c8c"/><rect x="12.5" y="278.95" width="2.5" height="1" fill="#8c8c8c"/><rect x="12.5" y="281.81" width="2.5" height="1" fill="#8c8c8c"/><rect x="12.5" y="284.68" width="2.5" height="1" fill="#8c8c8c"/><rect x="10.5" y="287.54" width="4.5" height="1" fill="#8c8c8c"/><rect x="12.5" y="290.41" width="2.5" height="1" fill="#8c8c8c"/><rect x="12.5" y="293.27" width="2.5" height="1" fill="#8c8c8c"/><rect x="12.5" y="296.13" width="2.5" height="1" fill="#8c8c8c"/><rect x="12.5" y="299.00" width="2.5" height="1" fill="#8c8c8c"/><rect x="0" y="301.86" width="15" height="1" fill="#8c8c8c"/><rect x="12.5" y="304.72" width="2.5" height="1" fill="#8c8c8c"/><rect x="12.5" y="307.59" width="2.5" height="1" fill="#8c8c8c"/><rect x="12.5" y="310.45" width="2.5" height="1" fill="#8c8c8c"/><rect x="12.5" y="313.31" width="2.5" height="1" fill="#8c8c8c"/><rect x="10.5" y="316.18" width="4.5" height="1" fill="#8c8c8c"/><rect x="12.5" y="319.04" width="2.5" height="1" fill="#8c8c8c"/><rect x="12.5" y="321.91" width="2.5" height="1" fill="#8c8c8c"/><rect x="12.5" y="324.77" width="2.5" height="1" fill="#8c8c8c"/><rect x="12.5" y="327.63" width="2.5" height="1" fill="#8c8c8c"/><rect x="0" y="330.50" width="15" height="1" fill="#8c8c8c"/><rect x="12.5" y="333.36" width="2.5" height="1" fill="#8c8c8c"/><rect x="12.5" y="336.22" width="2.5" height="1" fill="#8c8c8c"/><rect x="12.5" y="339.09" width="2.5" height="1" fill="#8c8c8c"/><rect x="12.5" y="341.95" width="2.5" height="1" fill="#8c8c8c"/><rect x="10.5" y="344.81" width="4.5" height="1" fill="#8c8c8c"/><rect x="12.5" y="347.68" width="2.5" height="1" fill="#8c8c8c"/><rect x="12.5" y="350.54" width="2.5" height="1" fill="#8c8c8c"/><rect x="12.5" y="353.40" width="2.5" height="1" fill="#8c8c8c"/><rect x="12.5" y="356.27" width="2.5" height="1" fill="#8c8c8c"/><rect x="0" y="359.13" width="15" height="1" fill="#8c8c8c"/><rect x="12.5" y="362.00" width="2.5" height="1" fill="#8c8c8c"/><rect x="12.5" y="364.86" width="2.5" height="1" fill="#8c8c8c"/><rect x="12.5" y="367.72" width="2.5" height="1" fill="#8c8c8c"/><rect x="12.5" y="370.59" width="2.5" height="1" fill="#8c8c8c"/><rect x="10.5" y="373.45" width="4.5" height="1" fill="#8c8c8c"/><rect x="12.5" y="376.31" width="2.5" height="1" fill="#8c8c8c"/><rect x="12.5" y="379.18" width="2.5" height="1" fill="#8c8c8c"/><rect x="12.5" y="382.04" width="2.5" height="1" fill="#8c8c8c"/><rect x="12.5" y="384.90" width="2.5" height="1" fill="#8c8c8c"/><rect x="0" y="387.77" width="15" height="1" fill="#8c8c8c"/><rect x="12.5" y="390.63" width="2.5" height="1" fill="#8c8c8c"/><rect x="12.5" y="393.50" width="2.5" height="1" fill="#8c8c8c"/><rect x="12.5" y="396.36" width="2.5" height="1" fill="#8c8c8c"/><rect x="12.5" y="399.22" width="2.5" height="1" fill="#8c8c8c"/><rect x="10.5" y="402.09" width="4.5" height="1" fill="#8c8c8c"/><rect x="12.5" y="404.95" width="2.5" height="1" fill="#8c8c8c"/><rect x="12.5" y="407.81" width="2.5" height="1" fill="#8c8c8c"/><rect x="12.5" y="410.68" width="2.5" height="1" fill="#8c8c8c"/><rect x="12.5" y="413.54" width="2.5" height="1" fill="#8c8c8c"/><rect x="0" y="416.40" width="15" height="1" fill="#8c8c8c"/><rect x="12.5" y="419.27" width="2.5" height="1" fill="#8c8c8c"/><rect x="12.5" y="422.13" width="2.5" height="1" fill="#8c8c8c"/><rect x="12.5" y="424.99" width="2.5" height="1" fill="#8c8c8c"/><rect x="12.5" y="427.86" width="2.5" height="1" fill="#8c8c8c"/><rect x="10.5" y="430.72" width="4.5" height="1" fill="#8c8c8c"/><rect x="12.5" y="433.59" width="2.5" height="1" fill="#8c8c8c"/><rect x="12.5" y="436.45" width="2.5" height="1" fill="#8c8c8c"/><rect x="12.5" y="439.31" width="2.5" height="1" fill="#8c8c8c"/><rect x="12.5" y="442.18" width="2.5" height="1" fill="#8c8c8c"/><rect x="0" y="445.04" width="15" height="1" fill="#8c8c8c"/><rect x="12.5" y="447.90" width="2.5" height="1" fill="#8c8c8c"/><rect x="12.5" y="450.77" width="2.5" height="1" fill="#8c8c8c"/><rect x="12.5" y="453.63" width="2.5" height="1" fill="#8c8c8c"/><rect x="12.5" y="456.49" width="2.5" height="1" fill="#8c8c8c"/><rect x="10.5" y="459.36" width="4.5" height="1" fill="#8c8c8c"/><rect x="12.5" y="462.22" width="2.5" height="1" fill="#8c8c8c"/><rect x="12.5" y="465.09" width="2.5" height="1" fill="#8c8c8c"/><rect x="12.5" y="467.95" width="2.5" height="1" fill="#8c8c8c"/><rect x="12.5" y="470.81" width="2.5" height="1" fill="#8c8c8c"/><rect x="0" y="473.68" width="15" height="1" fill="#8c8c8c"/><rect x="12.5" y="476.54" width="2.5" height="1" fill="#8c8c8c"/><rect x="12.5" y="479.40" width="2.5" height="1" fill="#8c8c8c"/><rect x="12.5" y="482.27" width="2.5" height="1" fill="#8c8c8c"/><rect x="12.5" y="485.13" width="2.5" height="1" fill="#8c8c8c"/><rect x="10.5" y="487.99" width="4.5" height="1" fill="#8c8c8c"/><rect x="12.5" y="490.86" width="2.5" height="1" fill="#8c8c8c"/><rect x="12.5" y="493.72" width="2.5" height="1" fill="#8c8c8c"/><rect x="12.5" y="496.58" width="2.5" height="1" fill="#8c8c8c"/><rect x="12.5" y="499.45" width="2.5" height="1" fill="#8c8c8c"/><rect x="0" y="502.31" width="15" height="1" fill="#8c8c8c"/><rect x="12.5" y="505.18" width="2.5" height="1" fill="#8c8c8c"/><rect x="12.5" y="508.04" width="2.5" height="1" fill="#8c8c8c"/><rect x="12.5" y="510.90" width="2.5" height="1" fill="#8c8c8c"/><rect x="12.5" y="513.77" width="2.5" height="1" fill="#8c8c8c"/><rect x="10.5" y="516.63" width="4.5" height="1" fill="#8c8c8c"/><rect x="12.5" y="519.49" width="2.5" height="1" fill="#8c8c8c"/><rect x="12.5" y="522.36" width="2.5" height="1" fill="#8c8c8c"/><rect x="12.5" y="525.22" width="2.5" height="1" fill="#8c8c8c"/><rect x="12.5" y="528.08" width="2.5" height="1" fill="#8c8c8c"/><rect x="0" y="530.95" width="15" height="1" fill="#8c8c8c"/><rect x="12.5" y="533.81" width="2.5" height="1" fill="#8c8c8c"/><rect x="12.5" y="536.68" width="2.5" height="1" fill="#8c8c8c"/><rect x="12.5" y="539.54" width="2.5" height="1" fill="#8c8c8c"/><rect x="12.5" y="542.40" width="2.5" height="1" fill="#8c8c8c"/><rect x="10.5" y="545.27" width="4.5" height="1" fill="#8c8c8c"/><rect x="12.5" y="548.13" width="2.5" height="1" fill="#8c8c8c"/><rect x="12.5" y="550.99" width="2.5" height="1" fill="#8c8c8c"/><rect x="12.5" y="553.86" width="2.5" height="1" fill="#8c8c8c"/><rect x="12.5" y="556.72" width="2.5" height="1" fill="#8c8c8c"/><rect x="0" y="559.58" width="15" height="1" fill="#8c8c8c"/><rect x="12.5" y="562.45" width="2.5" height="1" fill="#8c8c8c"/><rect x="12.5" y="565.31" width="2.5" height="1" fill="#8c8c8c"/><rect x="12.5" y="568.17" width="2.5" height="1" fill="#8c8c8c"/><rect x="12.5" y="571.04" width="2.5" height="1" fill="#8c8c8c"/><rect x="10.5" y="573.90" width="4.5" height="1" fill="#8c8c8c"/><rect x="12.5" y="576.77" width="2.5" height="1" fill="#8c8c8c"/><rect x="12.5" y="579.63" width="2.5" height="1" fill="#8c8c8c"/><rect x="12.5" y="582.49" width="2.5" height="1" fill="#8c8c8c"/><rect x="12.5" y="585.36" width="2.5" height="1" fill="#8c8c8c"/><rect x="0" y="588.22" width="15" height="1" fill="#8c8c8c"/><rect x="12.5" y="591.08" width="2.5" height="1" fill="#8c8c8c"/><rect x="12.5" y="593.95" width="2.5" height="1" fill="#8c8c8c"/><rect x="12.5" y="596.81" width="2.5" height="1" fill="#8c8c8c"/><rect x="12.5" y="599.67" width="2.5" height="1" fill="#8c8c8c"/><rect x="10.5" y="602.54" width="4.5" height="1" fill="#8c8c8c"/><rect x="12.5" y="605.40" width="2.5" height="1" fill="#8c8c8c"/><rect x="12.5" y="608.27" width="2.5" height="1" fill="#8c8c8c"/><rect x="12.5" y="611.13" width="2.5" height="1" fill="#8c8c8c"/><rect x="12.5" y="613.99" width="2.5" height="1" fill="#8c8c8c"/><rect x="0" y="616.86" width="15" height="1" fill="#8c8c8c"/><rect x="12.5" y="619.72" width="2.5" height="1" fill="#8c8c8c"/><rect x="12.5" y="622.58" width="2.5" height="1" fill="#8c8c8c"/><rect x="12.5" y="625.45" width="2.5" height="1" fill="#8c8c8c"/><rect x="12.5" y="628.31" width="2.5" height="1" fill="#8c8c8c"/><rect x="10.5" y="631.17" width="4.5" height="1" fill="#8c8c8c"/><rect x="12.5" y="634.04" width="2.5" height="1" fill="#8c8c8c"/><rect x="12.5" y="636.90" width="2.5" height="1" fill="#8c8c8c"/><text x="3" y="-3.14" font-size="8.4" fill="#909090" font-family="Liberation Sans">1</text><text x="3" y="4.86" font-size="8.4" fill="#909090" font-family="Liberation Sans">0</text><text x="3" y="25.50" font-size="8.4" fill="#909090" font-family="Liberation Sans">0</text><text x="3" y="54.14" font-size="8.4" fill="#909090" font-family="Liberation Sans">1</text><text x="3" y="62.14" font-size="8.4" fill="#909090" font-family="Liberation Sans">0</text><text x="3" y="82.77" font-size="8.4" fill="#909090" font-family="Liberation Sans">2</text><text x="3" y="90.77" font-size="8.4" fill="#909090" font-family="Liberation Sans">0</text><text x="3" y="111.41" font-size="8.4" fill="#909090" font-family="Liberation Sans">3</text><text x="3" y="119.41" font-size="8.4" fill="#909090" font-family="Liberation Sans">0</text><text x="3" y="140.04" font-size="8.4" fill="#909090" font-family="Liberation Sans">4</text><text x="3" y="148.04" font-size="8.4" fill="#909090" font-family="Liberation Sans">0</text><text x="3" y="168.68" font-size="8.4" fill="#909090" font-family="Liberation Sans">5</text><text x="3" y="176.68" font-size="8.4" fill="#909090" font-family="Liberation Sans">0</text><text x="3" y="197.32" font-size="8.4" fill="#909090" font-family="Liberation Sans">6</text><text x="3" y="205.32" font-size="8.4" fill="#909090" font-family="Liberation Sans">0</text><text x="3" y="225.95" font-size="8.4" fill="#909090" font-family="Liberation Sans">7</text><text x="3" y="233.95" font-size="8.4" fill="#909090" font-family="Liberation Sans">0</text><text x="3" y="254.59" font-size="8.4" fill="#909090" font-family="Liberation Sans">8</text><text x="3" y="262.59" font-size="8.4" fill="#909090" font-family="Liberation Sans">0</text><text x="3" y="283.22" font-size="8.4" fill="#909090" font-family="Liberation Sans">9</text><text x="3" y="291.22" font-size="8.4" fill="#909090" font-family="Liberation Sans">0</text><text x="3" y="311.86" font-size="8.4" fill="#909090" font-family="Liberation Sans">1</text><text x="3" y="319.86" font-size="8.4" fill="#909090" font-family="Liberation Sans">0</text><text x="3" y="327.86" font-size="8.4" fill="#909090" font-family="Liberation Sans">0</text><text x="3" y="340.50" font-size="8.4" fill="#909090" font-family="Liberation Sans">1</text><text x="3" y="348.50" font-size="8.4" fill="#909090" font-family="Liberation Sans">1</text><text x="3" y="356.50" font-size="8.4" fill="#909090" font-family="Liberation Sans">0</text><text x="3" y="369.13" font-size="8.4" fill="#909090" font-family="Liberation Sans">1</text><text x="3" y="377.13" font-size="8.4" fill="#909090" font-family="Liberation Sans">2</text><text x="3" y="385.13" font-size="8.4" fill="#909090" font-family="Liberation Sans">0</text><text x="3" y="397.77" font-size="8.4" fill="#909090" font-family="Liberation Sans">1</text><text x="3" y="405.77" font-size="8.4" fill="#909090" font-family="Liberation Sans">3</text><text x="3" y="413.77" font-size="8.4" fill="#909090" font-family="Liberation Sans">0</text><text x="3" y="426.40" font-size="8.4" fill="#909090" font-family="Liberation Sans">1</text><text x="3" y="434.40" font-size="8.4" fill="#909090" font-family="Liberation Sans">4</text><text x="3" y="442.40" font-size="8.4" fill="#909090" font-family="Liberation Sans">0</text><text x="3" y="455.04" font-size="8.4" fill="#909090" font-family="Liberation Sans">1</text><text x="3" y="463.04" font-size="8.4" fill="#909090" font-family="Liberation Sans">5</text><text x="3" y="471.04" font-size="8.4" fill="#909090" font-family="Liberation Sans">0</text><text x="3" y="483.68" font-size="8.4" fill="#909090" font-family="Liberation Sans">1</text><text x="3" y="491.68" font-size="8.4" fill="#909090" font-family="Liberation Sans">6</text><text x="3" y="499.68" font-size="8.4" fill="#909090" font-family="Liberation Sans">0</text><text x="3" y="512.31" font-size="8.4" fill="#909090" font-family="Liberation Sans">1</text><text x="3" y="520.31" font-size="8.4" fill="#909090" font-family="Liberation Sans">7</text><text x="3" y="528.31" font-size="8.4" fill="#909090" font-family="Liberation Sans">0</text><text x="3" y="540.95" font-size="8.4" fill="#909090" font-family="Liberation Sans">1</text><text x="3" y="548.95" font-size="8.4" fill="#909090" font-family="Liberation Sans">8</text><text x="3" y="556.95" font-size="8.4" fill="#909090" font-family="Liberation Sans">0</text><text x="3" y="569.58" font-size="8.4" fill="#909090" font-family="Liberation Sans">1</text><text x="3" y="577.58" font-size="8.4" fill="#909090" font-family="Liberation Sans">9</text><text x="3" y="585.58" font-size="8.4" fill="#909090" font-family="Liberation Sans">0</text><text x="3" y="598.22" font-size="8.4" fill="#909090" font-family="Liberation Sans">2</text><text x="3" y="606.22" font-size="8.4" fill="#909090" font-family="Liberation Sans">0</text><text x="3" y="614.22" font-size="8.4" fill="#909090" font-family="Liberation Sans">0</text><text x="3" y="626.86" font-size="8.4" fill="#909090" font-family="Liberation Sans">2</text><text x="3" y="634.86" font-size="8.4" fill="#909090" font-family="Liberation Sans">1</text><text x="3" y="642.86" font-size="8.4" fill="#909090" font-family="Liberation Sans">0</text></svg>
<svg class="r" style="left:45px;top:63.5px;" width="15" height="15.5" viewBox="0 0 15 15.5"><rect width="15" height="15.5" fill="#2b2b2b"/><path d="M8 3 V14 M3 8 H14" stroke="#8a8a8a" stroke-width="1" stroke-dasharray="1 1"/></svg>
<div class="r" style="left:101px;top:82px;width:874.5px;height:625.5px;background:transparent;border:1px solid #d27884;box-sizing:border-box;"></div>
<div class="r" style="left:102px;top:83px;width:872.5px;height:623.5px;background:transparent;border:1px solid #7a5860;box-sizing:border-box;"></div>
<div class="r" style="left:113.5px;top:96px;width:851.8px;height:601.6px;background:#000000;"></div>
<div class="r" style="left:112px;top:94px;width:851.4px;height:601.2px;background:#454545;"></div>
<div class="r" style="left:112.7px;top:95px;width:850.6999999999999px;height:600.2px;background:#ffffff;"></div>
<div class="r" style="left:131px;top:112px;width:814.2px;height:565.8px;background:transparent;border:1px solid #a96ab9;border-left-color:#5c4a92;border-right-color:#5c4a92;box-sizing:border-box;"></div>
<div class="r" style="left:391.9px;top:112px;width:1.0px;height:565.8px;background:#65509a;"></div>
<div class="r" style="left:406.9px;top:112px;width:1.0px;height:565.8px;background:#65509a;"></div>
<div class="r" style="left:668.0px;top:112px;width:1.0px;height:565.8px;background:#65509a;"></div>
<div class="r" style="left:683.0px;top:112px;width:1.0px;height:565.8px;background:#65509a;"></div>
<div class="r" style="left:112.7px;top:284.9px;width:850.6999999999999px;height:1.0px;background:#50c8cf;box-shadow:0 0 1.5px #9ff0f2;"></div>
<div class="r" style="left:112.7px;top:299.0px;width:850.6999999999999px;height:1.0px;background:#50c8cf;box-shadow:0 0 1.5px #9ff0f2;"></div>
<div class="r" style="left:112.7px;top:489.8px;width:850.6999999999999px;height:1.0px;background:#50c8cf;box-shadow:0 0 1.5px #9ff0f2;"></div>
<div class="r" style="left:112.7px;top:504.0px;width:850.6999999999999px;height:1.0px;background:#50c8cf;box-shadow:0 0 1.5px #9ff0f2;"></div>
<div class="r" style="left:45px;top:719px;width:985px;height:16px;background:#565656;"></div>
<div class="t" style="left:59.20px;top:723.42px;font-size:9.6px;line-height:9.6px;color:#d8d8d8;font-weight:400;letter-spacing:-0.083px;">75,75 %</div>
<div class="t" style="left:424.80px;top:311.94px;font-size:12.3px;line-height:12.3px;color:#ad2430;font-weight:400;letter-spacing:0.400px;-webkit-text-stroke:0.45px #ad2430;">Prospekte gestalten mit InDesign 2020</div>
<div class="t" style="left:417.40px;top:340.15px;font-size:7.21px;line-height:7.21px;color:#000000;font-weight:400;letter-spacing:0.101px;-webkit-text-stroke:0.1px #000;">Digitalisierung hin oder her – ohne mehrseitige Prospekte, Faltblätter und</div>
<div class="t" style="left:412.00px;top:352.29px;font-size:7.16px;line-height:7.16px;color:#000000;font-weight:400;letter-spacing:0.061px;-webkit-text-stroke:0.1px #000;">Broschüren kommt auch heute noch nahezu keine Firma aus. Umso wichtiger</div>
<div class="t" style="left:408.10px;top:364.26px;font-size:7.19px;line-height:7.19px;color:#000000;font-weight:400;letter-spacing:0.077px;-webkit-text-stroke:0.1px #000;">ist es, beim professionellen Erstellen dieser Werbemittel keine Zeit zu verlieren.</div>
<div class="t" style="left:409.70px;top:376.18px;font-size:7.17px;line-height:7.17px;color:#000000;font-weight:400;letter-spacing:0.068px;-webkit-text-stroke:0.1px #000;">Wie Sie einen dreiseitigen Prospekt ansprechend, schnell und einfach mit Ado-</div>
<div class="t" style="left:444.60px;top:388.30px;font-size:7.15px;line-height:7.15px;color:#000000;font-weight:400;letter-spacing:0.042px;-webkit-text-stroke:0.1px #000;">be InDesign 2020 gestalten, lernen Sie in diesem Tutorial.</div>
<div class="r" style="left:1033px;top:35px;width:251.29999999999995px;height:705px;background:#535353;"></div>
<div class="r" style="left:1033px;top:35px;width:251.29999999999995px;height:11.700000000000003px;background:#434343;"></div>
<svg class="r" style="left:1271px;top:37.5px;" width="9" height="7" viewBox="0 0 9 7"><path d="M1 1 L4 3.5 L1 6 Z M5 1 L8 3.5 L5 6 Z" fill="#d6d6d6"/></svg>
<div class="r" style="left:1033px;top:46.7px;width:251.29999999999995px;height:26.700000000000003px;background:#454545;"></div>
<div class="r" style="left:1032.4px;top:46.7px;width:97.59999999999991px;height:26.700000000000003px;background:#535353;"></div>
<div class="r" style="left:1130.4px;top:46.7px;width:49.59999999999991px;height:25.89999999999999px;background:#484848;border-right:1px solid #3f3f3f;box-sizing:border-box;"></div>
<div class="r" style="left:1180px;top:46.7px;width:65.79999999999995px;height:25.89999999999999px;background:#484848;border-right:1px solid #3f3f3f;box-sizing:border-box;"></div>
<div class="r" style="left:1130.4px;top:72.6px;width:153.89999999999986px;height:1.0px;background:#3c3c3c;"></div>
<div class="t" style="left:1045.00px;top:56.04px;font-size:11px;line-height:11px;color:#f0f0f0;font-weight:700;letter-spacing:-0.233px;">Eigenschaften</div>
<div class="t" style="left:1142.00px;top:56.04px;font-size:11px;line-height:11px;color:#b3b3b3;font-weight:700;letter-spacing:-0.340px;">Seiten</div>
<div class="r" style="left:1186px;top:46.7px;width:59px;height:26px;overflow:hidden;">
<div class="t" style="left:5.20px;top:9.34px;font-size:11px;line-height:11px;color:#b3b3b3;font-weight:700;letter-spacing:-0.309px;">CC Libraries</div>
</div>
<div class="r" style="left:1273.3px;top:73.4px;width:11.0px;height:661.6px;background:#4f4f4f;"></div>
<div class="r" style="left:1284.3px;top:34px;width:1.5px;height:701px;background:#383838;"></div>
<div class="r" style="left:1274px;top:86.8px;width:10.200000000000045px;height:588.5px;background:#6a6a6a;border-radius:5px;"></div>
<svg class="r" style="left:1274px;top:76px;" width="10" height="8" viewBox="0 0 10 8"><path d="M1.5 6 L5 2.5 L8.5 6" fill="none" stroke="#8a8a8a" stroke-width="1.1"/></svg>
<svg class="r" style="left:1274px;top:710px;" width="10" height="8" viewBox="0 0 10 8"><path d="M1.5 2 L5 5.5 L8.5 2" fill="none" stroke="#8a8a8a" stroke-width="1.1"/></svg>
<div class="t" style="left:1043.30px;top:86.88px;font-size:10px;line-height:10px;color:#e0e0e0;font-weight:400;letter-spacing:0.150px;">Texteinfügung</div>
<div class="r" style="left:1033px;top:107px;width:240.29999999999995px;height:1px;background:#474747;"></div>
<div class="t" style="left:1043.20px;top:120.69px;font-size:10px;line-height:10px;color:#e0e0e0;font-weight:400;letter-spacing:0.067px;">Textformat</div>
<div class="r" style="left:1043.6px;top:140.3px;width:217.9000000000001px;height:20.099999999999994px;background:#535353;border:1px solid #6a6a6a;border-radius:2px;box-sizing:border-box;"></div>
<div class="r" style="left:1044.2px;top:141px;width:107.79999999999995px;height:18.80000000000001px;background:#2d2d2d;"></div>
<div class="t" style="left:1065.00px;top:145.88px;font-size:10px;line-height:10px;color:#4a9be5;font-weight:400;letter-spacing:-0.217px;">Absatzformate</div>
<div class="t" style="left:1172.00px;top:145.88px;font-size:10px;line-height:10px;color:#e6e6e6;font-weight:400;letter-spacing:-0.115px;">Zeichenformate</div>
<div class="r" style="left:1043.5px;top:169.2px;width:219.0999999999999px;height:34.0px;background:#474747;border:1px solid #666666;border-radius:2px;box-sizing:border-box;"></div>
<div class="r" style="left:1243.7px;top:170px;width:1.0px;height:32.5px;background:#5a5a5a;"></div>
<div class="r" style="left:1049px;top:173.8px;width:24.09999999999991px;height:24.599999999999994px;background:#ffffff;border-radius:2px;"></div>
<div class="t" style="left:1052.40px;top:178.72px;font-size:13.38px;line-height:13.38px;color:#a8182a;font-weight:700;letter-spacing:-0.000px;">Ag</div>
<div class="t" style="left:1079.60px;top:181.88px;font-size:10px;line-height:10px;color:#ececec;font-weight:400;letter-spacing:-0.300px;">Headline</div>
<svg class="r" style="left:1120.8px;top:175.7px;" width="22.7" height="19.9" viewBox="0 0 22.7 19.9"><path d="M0 9.95 L10.22 0 L10.22 5.37 L22.70 5.37 L22.70 14.53 L10.22 14.53 L10.22 19.90 Z" fill="#e8151d"/></svg>
<svg class="r" style="left:1248.5px;top:183.5px;" width="9" height="6" viewBox="0 0 9 6"><path d="M0.5 1 L4.5 5 L8.5 1" fill="none" stroke="#d0d0d0" stroke-width="1.2"/></svg>
<svg class="r" style="left:1049px;top:215px;" width="16" height="13" viewBox="0 0 16 13"><text x="0" y="11" font-size="13" font-weight="700" fill="#bdbdbd" font-family="Liberation Sans">¶</text><path d="M11 10 L14 10 L12.5 12 Z" fill="#bdbdbd"/></svg>
<svg class="r" style="left:1174px;top:213.5px;" width="18" height="14" viewBox="0 0 18 14"><path d="M1 6 H7 M5 3.5 L7.5 6 L5 8.5" fill="none" stroke="#a0a0a0" stroke-width="1.4"/><path d="M8 1.5 H12 V6 H16.5 V13 H9 V9" fill="none" stroke="#a0a0a0" stroke-width="1.4"/></svg>
<svg class="r" style="left:1210px;top:214px;" width="18" height="14" viewBox="0 0 18 14"><text x="0" y="12" font-size="13" font-weight="700" fill="#8d8d8d" font-family="Liberation Sans">¶</text><path d="M11 11 L16 4 M12 5 L16 10" stroke="#8d8d8d" stroke-width="1.2"/></svg>
<svg class="r" style="left:1245.5px;top:215.5px;" width="12" height="12" viewBox="0 0 12 12"><rect x="0.6" y="0.6" width="10.8" height="10.8" fill="none" stroke="#c0c0c0" stroke-width="1.2"/><path d="M6 3 V9 M3 6 H9" stroke="#c0c0c0" stroke-width="1.2"/></svg>
<div class="r" style="left:1033px;top:239px;width:240.29999999999995px;height:1px;background:#474747;"></div>
<div class="t" style="left:1042.80px;top:252.88px;font-size:10px;line-height:10px;color:#e0e0e0;font-weight:400;letter-spacing:-0.186px;">Aussehen</div>
<svg class="r" style="left:1043.9px;top:272.8px;" width="16.2" height="16.2" viewBox="0 0 16.2 16.2"><rect width="16.2" height="16.2" fill="#ffffff"/><path d="M2.5 2.5 H13.7 V6 H12 V4.6 H9.3 V12.8 H10.8 V14.2 H5.4 V12.8 H6.9 V4.6 H4.2 V6 H2.5 Z" fill="#b81c2a"/></svg>
<div class="t" style="left:1071.20px;top:278.89px;font-size:10px;line-height:10px;color:#ececec;font-weight:400;letter-spacing:-0.440px;">Fläche</div>
<svg class="r" style="left:1044px;top:299.2px;" width="15.5" height="15" viewBox="0 0 15.5 15"><rect width="15.5" height="15" fill="#ffffff"/><path d="M3 3 H12.5 V6 M7.7 3 V12" fill="none" stroke="#c8c8c8" stroke-width="1.2"/><path d="M0.5 14.5 L15 0.5" stroke="#c41f2b" stroke-width="2.2"/></svg>
<div class="t" style="left:1071.60px;top:304.59px;font-size:10px;line-height:10px;color:#cfcfcf;font-weight:400;letter-spacing:-0.020px;">Kontur</div>
<div class="r" style="left:1071.6px;top:314.2px;width:33.40000000000009px;height:1.0px;background:#bdbdbd;"></div>
<div class="r" style="left:1133.1px;top:298.2px;width:69.40000000000009px;height:20.400000000000034px;background:#474747;border:1px solid #6a6a6a;border-radius:2px;box-sizing:border-box;"></div>
<div class="r" style="left:1150px;top:298.5px;width:1px;height:19.80000000000001px;background:#6a6a6a;"></div>
<div class="r" style="left:1184.5px;top:298.5px;width:1.0px;height:19.80000000000001px;background:#6a6a6a;"></div>
<svg class="r" style="left:1137.5px;top:309px;" width="8" height="6" viewBox="0 0 8 6"><path d="M0.5 1 L4.0 5 L7.5 1" fill="none" stroke="#c8c8c8" stroke-width="1.1"/></svg>
<div class="t" style="left:1154.00px;top:304.89px;font-size:10px;line-height:10px;color:#e8e8e8;font-weight:400;letter-spacing:-0.267px;">0 Pt</div>
<svg class="r" style="left:1189.0px;top:305.5px;" width="9" height="6" viewBox="0 0 9 6"><path d="M0.5 1 L4.5 5 L8.5 1" fill="none" stroke="#d0d0d0" stroke-width="1.2"/></svg>
<div class="r" style="left:1207.7px;top:298.2px;width:55.0px;height:20.400000000000034px;background:#5a5a5a;border-radius:2px;"></div>
<svg class="r" style="left:1248.5px;top:305.5px;" width="9" height="6" viewBox="0 0 9 6"><path d="M0.5 1 L4.5 5 L8.5 1" fill="none" stroke="#8c8c8c" stroke-width="1.2"/></svg>
<div class="r" style="left:1033px;top:330px;width:240.29999999999995px;height:1px;background:#474747;"></div>
<div class="t" style="left:1043.30px;top:343.89px;font-size:10px;line-height:10px;color:#e0e0e0;font-weight:400;letter-spacing:-0.317px;">Zeichen</div>
<div class="r" style="left:1043.3px;top:363.2px;width:218.9000000000001px;height:20.19999999999999px;background:#474747;border:1px solid #666666;border-radius:2px;box-sizing:border-box;"></div>
<div class="r" style="left:1244.5px;top:363.8px;width:1.0px;height:19.0px;background:#5a5a5a;"></div>
<svg class="r" style="left:1249.0px;top:370.5px;" width="9" height="6" viewBox="0 0 9 6"><path d="M0.5 1 L4.5 5 L8.5 1" fill="none" stroke="#d0d0d0" stroke-width="1.2"/></svg>
<svg class="r" style="left:1045px;top:366px;" width="20" height="14" viewBox="0 0 20 14"><circle cx="5.5" cy="5.5" r="4" fill="none" stroke="#bdbdbd" stroke-width="1.3"/><path d="M8.5 8.5 L11.5 11.5" stroke="#bdbdbd" stroke-width="1.6"/><path d="M13 5.5 L15.5 8 L18 5.5" fill="none" stroke="#bdbdbd" stroke-width="1.1"/></svg>
<div class="t" style="left:1067.60px;top:369.89px;font-size:10px;line-height:10px;color:#ececec;font-weight:400;letter-spacing:0.010px;">Arial Rounded MT Bold</div>
<div class="r" style="left:1043.3px;top:389.3px;width:218.9000000000001px;height:20.099999999999966px;background:#474747;border:1px solid #666666;border-radius:2px;box-sizing:border-box;"></div>
<div class="r" style="left:1244.5px;top:389.8px;width:1.0px;height:19.0px;background:#5a5a5a;"></div>
<svg class="r" style="left:1249.0px;top:396.5px;" width="9" height="6" viewBox="0 0 9 6"><path d="M0.5 1 L4.5 5 L8.5 1" fill="none" stroke="#d0d0d0" stroke-width="1.2"/></svg>
<div class="t" style="left:1047.30px;top:395.89px;font-size:10px;line-height:10px;color:#ececec;font-weight:400;letter-spacing:-0.217px;">Regular</div>
<div class="r" style="left:1066.3px;top:415.6px;width:79.0px;height:20.19999999999999px;background:#474747;border:1px solid #666666;border-radius:2px;box-sizing:border-box;"></div>
<div class="r" style="left:1084.8999999999999px;top:416.1px;width:1.0px;height:19.19999999999999px;background:#5a5a5a;"></div>
<svg class="r" style="left:1071.3px;top:418.70000000000005px;" width="9" height="14" viewBox="0 0 9 14"><path d="M0.8 4.2 L4.5 1 L8.2 4.2 M0.8 9.8 L4.5 13 L8.2 9.8" fill="none" stroke="#c4c4c4" stroke-width="1"/></svg>
<div class="t" style="left:1088.40px;top:421.59px;font-size:10px;line-height:10px;color:#ececec;font-weight:400;letter-spacing:-0.350px;">12 Pt</div>
<div class="r" style="left:1127px;top:416px;width:1px;height:19.30000000000001px;background:#5a5a5a;"></div>
<svg class="r" style="left:1122px;top:415.6px;" width="22.7" height="20.2" viewBox="0 0 22.7 20.2"><path d="M0 10.10 L10.22 0 L10.22 5.45 L22.70 5.45 L22.70 14.75 L10.22 14.75 L10.22 20.20 Z" fill="#e8151d"/></svg>
<div class="r" style="left:1183.4px;top:415.4px;width:78.79999999999995px;height:20.100000000000023px;background:#474747;border:1px solid #666666;border-radius:2px;box-sizing:border-box;"></div>
<div class="r" style="left:1202.0px;top:415.9px;width:1.0px;height:19.100000000000023px;background:#5a5a5a;"></div>
<svg class="r" style="left:1188.4px;top:418.45px;" width="9" height="14" viewBox="0 0 9 14"><path d="M0.8 4.2 L4.5 1 L8.2 4.2 M0.8 9.8 L4.5 13 L8.2 9.8" fill="none" stroke="#c4c4c4" stroke-width="1"/></svg>
<div class="t" style="left:1205.70px;top:421.34px;font-size:10px;line-height:10px;color:#ececec;font-weight:400;letter-spacing:-0.375px;">16 Pt</div>
<svg class="r" style="left:1237.2px;top:415.4px;" width="22.3" height="20.1" viewBox="0 0 22.3 20.1"><path d="M0 10.05 L10.03 0 L10.03 5.43 L22.30 5.43 L22.30 14.67 L10.03 14.67 L10.03 20.10 Z" fill="#e8151d"/></svg>
<div class="r" style="left:1066.3px;top:441.7px;width:79.0px;height:19.80000000000001px;background:#474747;border:1px solid #666666;border-radius:2px;box-sizing:border-box;"></div>
<div class="r" style="left:1084.8999999999999px;top:442.2px;width:1.0px;height:18.80000000000001px;background:#5a5a5a;"></div>
<svg class="r" style="left:1071.3px;top:444.6px;" width="9" height="14" viewBox="0 0 9 14"><path d="M0.8 4.2 L4.5 1 L8.2 4.2 M0.8 9.8 L4.5 13 L8.2 9.8" fill="none" stroke="#c4c4c4" stroke-width="1"/></svg>
<div class="t" style="left:1087.60px;top:447.49px;font-size:10px;line-height:10px;color:#ececec;font-weight:400;letter-spacing:0.600px;">(0)</div>
<div class="r" style="left:1127.5px;top:442.2px;width:1.0px;height:18.80000000000001px;background:#5a5a5a;"></div>
<svg class="r" style="left:1132.3px;top:448.6px;" width="9" height="6" viewBox="0 0 9 6"><path d="M0.5 1 L4.5 5 L8.5 1" fill="none" stroke="#d0d0d0" stroke-width="1.2"/></svg>
<div class="r" style="left:1183.4px;top:441.7px;width:78.79999999999995px;height:19.80000000000001px;background:#474747;border:1px solid #666666;border-radius:2px;box-sizing:border-box;"></div>
<div class="r" style="left:1202.0px;top:442.2px;width:1.0px;height:18.80000000000001px;background:#5a5a5a;"></div>
<svg class="r" style="left:1188.4px;top:444.6px;" width="9" height="14" viewBox="0 0 9 14"><path d="M0.8 4.2 L4.5 1 L8.2 4.2 M0.8 9.8 L4.5 13 L8.2 9.8" fill="none" stroke="#c4c4c4" stroke-width="1"/></svg>
<div class="t" style="left:1205.50px;top:447.49px;font-size:10px;line-height:10px;color:#ececec;font-weight:400;letter-spacing:0.000px;">0</div>
<div class="r" style="left:1244.6000000000001px;top:442.2px;width:1.0px;height:18.80000000000001px;background:#5a5a5a;"></div>
<svg class="r" style="left:1249.4px;top:448.6px;" width="9" height="6" viewBox="0 0 9 6"><path d="M0.5 1 L4.5 5 L8.5 1" fill="none" stroke="#d0d0d0" stroke-width="1.2"/></svg>
<svg class="r" style="left:1042.5px;top:418.5px;" width="20" height="15" viewBox="0 0 20 15"><path d="M0.5 6.5 H7.5 V8.5 H6.6 V7.8 H4.8 V13 H5.8 V14.3 H2.2 V13 H3.2 V7.8 H1.4 V8.5 H0.5 Z" fill="#cfcfcf"/><path d="M5.3 0.5 H18.5 V4.2 H17 V2.5 H13.2 V12.6 H15 V14.3 H8.8 V12.6 H10.6 V2.5 H6.8 V4.2 H5.3 Z" fill="#cfcfcf"/></svg>
<svg class="r" style="left:1160px;top:416px;" width="19" height="19" viewBox="0 0 19 19"><path d="M5.5 8 L8.5 1 L11.5 8 M6.8 5.5 H10.2 M4.5 8.5 H12.5" fill="none" stroke="#c8c8c8" stroke-width="1"/><path d="M5.5 17 L8.5 10 L11.5 17 M6.8 14.5 H10.2 M4.5 17.5 H12.5" fill="none" stroke="#c8c8c8" stroke-width="1"/><path d="M2 9.5 V17.5 M0.5 11 L2 9.5 L3.5 11 M0.5 16 L2 17.5 L3.5 16" fill="none" stroke="#c8c8c8" stroke-width="1.1"/></svg>
<svg class="r" style="left:1042.5px;top:443.5px;" width="20" height="18" viewBox="0 0 20 18"><path d="M0.8 1 L4.5 11 L8.2 1" fill="none" stroke="#c8c8c8" stroke-width="1.5"/><path d="M5.5 12 L10 0.5" stroke="#c8c8c8" stroke-width="1.2"/><path d="M8.5 11 L12.5 1 L16.5 11 M10 7.5 H15" fill="none" stroke="#c8c8c8" stroke-width="1.5"/><path d="M9.5 15 H17.5 M11.5 13 L9.5 15 L11.5 17" fill="none" stroke="#c8c8c8" stroke-width="1.2"/></svg>
<svg class="r" style="left:1160px;top:443.5px;" width="19" height="18" viewBox="0 0 19 18"><rect x="0.5" y="0" width="17.5" height="11.5" fill="#c8c8c8"/><path d="M2 1.5 L5.2 10 L8.4 1.5" fill="none" stroke="#535353" stroke-width="1.4"/><path d="M8.6 10 L11.9 1.5 L15.2 10 M10 7 H13.8" fill="none" stroke="#535353" stroke-width="1.4"/><path d="M1 15.5 H17.5 M3 13.5 L1 15.5 L3 17.5 M15.5 13.5 L17.5 15.5 L15.5 17.5" fill="none" stroke="#c8c8c8" stroke-width="1.1"/></svg>
<div class="r" style="left:1253px;top:475.6px;width:4px;height:4px;border-radius:50%;background:#bcbcbc;"></div>
<div class="r" style="left:1258px;top:475.6px;width:4px;height:4px;border-radius:50%;background:#bcbcbc;"></div>
<div class="r" style="left:1263px;top:475.6px;width:4px;height:4px;border-radius:50%;background:#bcbcbc;"></div>
<div class="r" style="left:1033px;top:491px;width:240.29999999999995px;height:1px;background:#474747;"></div>
<div class="t" style="left:1043.20px;top:504.69px;font-size:10px;line-height:10px;color:#e0e0e0;font-weight:400;letter-spacing:-0.240px;">Absatz</div>
<div class="r" style="left:1068.1px;top:525.2px;width:21.700000000000045px;height:21.09999999999991px;background:#2a2a2a;border-radius:3px;"></div>
<svg class="r" style="left:1048.1px;top:528.8px;" width="14.6" height="15" viewBox="0 0 14.6 15"><rect x="0.00" y="0.00" width="10.51" height="1.2" fill="#d4d4d4"/><rect x="0.00" y="3.30" width="14.60" height="1.2" fill="#d4d4d4"/><rect x="0.00" y="6.60" width="10.51" height="1.2" fill="#d4d4d4"/><rect x="0.00" y="9.90" width="14.60" height="1.2" fill="#d4d4d4"/><rect x="0.00" y="13.20" width="10.51" height="1.2" fill="#d4d4d4"/></svg>
<svg class="r" style="left:1071.4px;top:528.8px;" width="14.6" height="15" viewBox="0 0 14.6 15"><rect x="2.19" y="0.00" width="10.22" height="1.2" fill="#d4d4d4"/><rect x="0.00" y="3.30" width="14.60" height="1.2" fill="#d4d4d4"/><rect x="2.19" y="6.60" width="10.22" height="1.2" fill="#d4d4d4"/><rect x="0.00" y="9.90" width="14.60" height="1.2" fill="#d4d4d4"/><rect x="2.19" y="13.20" width="10.22" height="1.2" fill="#d4d4d4"/></svg>
<svg class="r" style="left:1095.1px;top:528.8px;" width="14.6" height="15" viewBox="0 0 14.6 15"><rect x="4.09" y="0.00" width="10.51" height="1.2" fill="#d4d4d4"/><rect x="0.00" y="3.30" width="14.60" height="1.2" fill="#d4d4d4"/><rect x="4.09" y="6.60" width="10.51" height="1.2" fill="#d4d4d4"/><rect x="0.00" y="9.90" width="14.60" height="1.2" fill="#d4d4d4"/><rect x="4.09" y="13.20" width="10.51" height="1.2" fill="#d4d4d4"/></svg>
<svg class="r" style="left:1121.5px;top:528.8px;" width="14.6" height="15" viewBox="0 0 14.6 15"><rect x="0.00" y="0.00" width="14.60" height="1.2" fill="#d4d4d4"/><rect x="0.00" y="3.30" width="14.60" height="1.2" fill="#d4d4d4"/><rect x="0.00" y="6.60" width="14.60" height="1.2" fill="#d4d4d4"/><rect x="0.00" y="9.90" width="14.60" height="1.2" fill="#d4d4d4"/><rect x="0.00" y="13.20" width="8.76" height="1.2" fill="#d4d4d4"/></svg>
<svg class="r" style="left:1145.8px;top:528.8px;" width="14.6" height="15" viewBox="0 0 14.6 15"><rect x="0.00" y="0.00" width="14.60" height="1.2" fill="#d4d4d4"/><rect x="0.00" y="3.30" width="14.60" height="1.2" fill="#d4d4d4"/><rect x="0.00" y="6.60" width="14.60" height="1.2" fill="#d4d4d4"/><rect x="0.00" y="9.90" width="14.60" height="1.2" fill="#d4d4d4"/><rect x="2.92" y="13.20" width="8.76" height="1.2" fill="#d4d4d4"/></svg>
<svg class="r" style="left:1169.7px;top:528.8px;" width="14.6" height="15" viewBox="0 0 14.6 15"><rect x="0.00" y="0.00" width="14.60" height="1.2" fill="#d4d4d4"/><rect x="0.00" y="3.30" width="14.60" height="1.2" fill="#d4d4d4"/><rect x="0.00" y="6.60" width="14.60" height="1.2" fill="#d4d4d4"/><rect x="0.00" y="9.90" width="14.60" height="1.2" fill="#d4d4d4"/><rect x="5.84" y="13.20" width="8.76" height="1.2" fill="#d4d4d4"/></svg>
<svg class="r" style="left:1193.7px;top:528.8px;" width="14.6" height="15" viewBox="0 0 14.6 15"><rect x="0.00" y="0.00" width="14.60" height="1.2" fill="#d4d4d4"/><rect x="0.00" y="3.30" width="14.60" height="1.2" fill="#d4d4d4"/><rect x="0.00" y="6.60" width="14.60" height="1.2" fill="#d4d4d4"/><rect x="0.00" y="9.90" width="14.60" height="1.2" fill="#d4d4d4"/><rect x="0.00" y="13.20" width="14.60" height="1.2" fill="#d4d4d4"/></svg>
<svg class="r" style="left:1219.5px;top:528.8px;" width="14.6" height="15" viewBox="0 0 14.6 15"><rect x="4.06" y="0.00" width="7.54" height="1.2" fill="#d4d4d4"/><rect x="0.00" y="3.30" width="11.60" height="1.2" fill="#d4d4d4"/><rect x="4.06" y="6.60" width="7.54" height="1.2" fill="#d4d4d4"/><rect x="0.00" y="9.90" width="11.60" height="1.2" fill="#d4d4d4"/><rect x="4.06" y="13.20" width="7.54" height="1.2" fill="#d4d4d4"/><rect x="13.40" y="-1" width="1.1" height="15.5" fill="#d4d4d4"/></svg>
<svg class="r" style="left:1243.8px;top:528.8px;" width="14.6" height="15" viewBox="0 0 14.6 15"><rect x="0.00" y="0.00" width="7.54" height="1.2" fill="#d4d4d4"/><rect x="0.00" y="3.30" width="11.60" height="1.2" fill="#d4d4d4"/><rect x="0.00" y="6.60" width="7.54" height="1.2" fill="#d4d4d4"/><rect x="0.00" y="9.90" width="11.60" height="1.2" fill="#d4d4d4"/><rect x="0.00" y="13.20" width="7.54" height="1.2" fill="#d4d4d4"/><rect x="13.40" y="-1" width="1.1" height="15.5" fill="#d4d4d4"/></svg>
<div class="r" style="left:1253px;top:561.7px;width:4px;height:4px;border-radius:50%;background:#bcbcbc;"></div>
<div class="r" style="left:1258px;top:561.7px;width:4px;height:4px;border-radius:50%;background:#bcbcbc;"></div>
<div class="r" style="left:1263px;top:561.7px;width:4px;height:4px;border-radius:50%;background:#bcbcbc;"></div>
<div class="r" style="left:1033px;top:577.3px;width:240.29999999999995px;height:1.0px;background:#474747;"></div>
<div class="t" style="left:1043.00px;top:590.88px;font-size:10px;line-height:10px;color:#e0e0e0;font-weight:400;letter-spacing:0.012px;">Aufzählungszeichen und Nummerierung</div>
<svg class="r" style="left:1047.8px;top:615px;" width="16" height="14" viewBox="0 0 16 14"><circle cx="2" cy="2.5" r="2" fill="#c4c4c4"/><circle cx="2" cy="11" r="2" fill="#c4c4c4"/><path d="M5 1 H15.5 M5 4 H15.5 M5 9.5 H15.5 M5 12.5 H15.5" stroke="#c4c4c4" stroke-width="1"/></svg>
<svg class="r" style="left:1080px;top:614px;" width="16" height="16" viewBox="0 0 16 16"><text x="0" y="7" font-size="7.5" fill="#c4c4c4" font-family="Liberation Sans">1</text><text x="0" y="15.5" font-size="7.5" fill="#c4c4c4" font-family="Liberation Sans">2</text><path d="M5.5 2 H15.5 M5.5 5 H15.5 M5.5 10.5 H15.5 M5.5 13.5 H15.5" stroke="#c4c4c4" stroke-width="1"/></svg>
<div class="r" style="left:1198.3px;top:610.2px;width:64.70000000000005px;height:19.399999999999977px;background:transparent;border:1px solid #7c7c7c;border-radius:2px;box-sizing:border-box;"></div>
<div class="t" style="left:1209.50px;top:615.79px;font-size:10px;line-height:10px;color:#e4e4e4;font-weight:400;letter-spacing:-0.071px;">Optionen</div>
<div class="r" style="left:1033px;top:640.3px;width:240.29999999999995px;height:1.0px;background:#474747;"></div>
<div class="t" style="left:1043.00px;top:648.88px;font-size:10px;line-height:10px;color:#e0e0e0;font-weight:400;letter-spacing:-0.157px;">Schnellaktionen</div>
<div class="r" style="left:1043.4px;top:668.6px;width:104.29999999999995px;height:20.100000000000023px;background:transparent;border:1px solid #7c7c7c;border-radius:2px;box-sizing:border-box;"></div>
<div class="t" style="left:1056.30px;top:674.54px;font-size:10px;line-height:10px;color:#e4e4e4;font-weight:400;letter-spacing:-0.067px;">Fußnote einfügen</div>
<div class="r" style="left:1158.2px;top:668.6px;width:104.79999999999995px;height:20.100000000000023px;background:transparent;border:1px solid #7c7c7c;border-radius:2px;box-sizing:border-box;"></div>
<div class="t" style="left:1170.00px;top:674.54px;font-size:10px;line-height:10px;color:#e4e4e4;font-weight:400;letter-spacing:0.007px;">Endnote einfügen</div>
<div class="r" style="left:1043.4px;top:699.4px;width:219.5999999999999px;height:20.200000000000045px;background:transparent;border:1px solid #7c7c7c;border-radius:2px;box-sizing:border-box;"></div>
<div class="t" style="left:1099.00px;top:705.38px;font-size:10px;line-height:10px;color:#e4e4e4;font-weight:400;letter-spacing:-0.090px;">Sonderzeichen einfügen</div>
<div class="r" style="left:1043.4px;top:730.3px;width:219.5999999999999px;height:14.700000000000045px;background:transparent;border:1px solid #7c7c7c;border-radius:2px;box-sizing:border-box;"></div>
<div class="r" style="left:1033px;top:735px;width:257px;height:1px;background:#3a3a3a;"></div>
<div class="r" style="left:1033px;top:736px;width:257px;height:2.6000000000000227px;background:#535353;"></div>
<div class="r" style="left:0px;top:738.6px;width:1290px;height:1.3999999999999773px;background:#3a3a3a;"></div>
<svg class="r" style="left:18px;top:65.5px;" width="12.5" height="17" viewBox="0 0 12.5 17"><path d="M0.8 0.8 V15.5 L4.8 11.6 L11.6 10.8 Z" fill="none" stroke="#c8c8c8" stroke-width="1.4" stroke-linejoin="miter"/></svg>
<svg class="r" style="left:18px;top:89.5px;" width="12.5" height="17" viewBox="0 0 12.5 17"><path d="M0.5 0.5 V16.5 L4.8 12 L12 11 Z" fill="#c8c8c8"/></svg>
<svg class="r" style="left:17px;top:113px;" width="15" height="16" viewBox="0 0 15 16"><path d="M1 1 H7 L10.5 4.5 V8 M1 1 V14.5 H8" fill="none" stroke="#c8c8c8" stroke-width="1.3"/><path d="M7 1 V4.5 H10.5" fill="none" stroke="#c8c8c8" stroke-width="1.1"/><path d="M9 7.5 L14.5 12.5 L9 15.5 Z" fill="#c8c8c8"/></svg>
<svg class="r" style="left:14px;top:138.5px;" width="18" height="14" viewBox="0 0 18 14"><path d="M1 0.5 V13.5 M17 0.5 V13.5 M3.5 7 H14.5 M6 4.5 L3.5 7 L6 9.5 M12 4.5 L14.5 7 L12 9.5" fill="none" stroke="#c8c8c8" stroke-width="1.3"/></svg>
<svg class="r" style="left:15px;top:160.5px;" width="17" height="17" viewBox="0 0 17 17"><path d="M1 8 V15.5 H15 V8" fill="none" stroke="#c8c8c8" stroke-width="1.4"/><path d="M3.5 0.5 L8 5 M5 5.5 H8.5 V2" fill="none" stroke="#c8c8c8" stroke-width="1.4"/><path d="M4 10 H5.5 M7 10 H8.5 M10 10 H11.5 M4 12.5 H5.5 M7 12.5 H8.5 M10 12.5 H11.5" stroke="#c8c8c8" stroke-width="1.3"/></svg>
<svg class="r" style="left:34px;top:173px;" width="3" height="3" viewBox="0 0 3 3"><path d="M3 0 V3 H0 Z" fill="#d0d0d0"/></svg>
<div class="r" style="left:9px;top:184.4px;width:28.1px;height:22.299999999999983px;background:#2c2c2c;border-radius:3px;"></div>
<svg class="r" style="left:16px;top:187px;" width="14" height="16" viewBox="0 0 14 16"><path d="M0.5 0.5 H13.5 V4.5 H12 V2.5 H8.1 V13.5 H10.3 V15.5 H3.7 V13.5 H5.9 V2.5 H2 V4.5 H0.5 Z" fill="#e6e6e6"/></svg>
<svg class="r" style="left:33px;top:202px;" width="3" height="3" viewBox="0 0 3 3"><path d="M3 0 V3 H0 Z" fill="#d0d0d0"/></svg>
<svg class="r" style="left:14.5px;top:212.5px;" width="17" height="15.5" viewBox="0 0 17 15.5"><path d="M1 14.5 L16 1" stroke="#c8c8c8" stroke-width="1.9"/></svg>
<svg class="r" style="left:14px;top:236px;" width="18" height="17" viewBox="0 0 18 17"><path d="M2 16 L4 9 L10 3 L15 8 L9 14 Z" fill="#c8c8c8"/><path d="M11 2 L13 0 L18 5 L16 7" fill="#c8c8c8"/><circle cx="8" cy="9.5" r="1.2" fill="#535353"/><path d="M2 16 L7.5 10.5" stroke="#535353" stroke-width="0.8"/></svg>
<svg class="r" style="left:33.5px;top:251px;" width="3" height="3" viewBox="0 0 3 3"><path d="M3 0 V3 H0 Z" fill="#d0d0d0"/></svg>
<svg class="r" style="left:14.3px;top:259.3px;" width="17" height="16.5" viewBox="0 0 17 16.5"><path d="M1 15.5 L2 11 L11.5 1.5 L15 5 L5.5 14.5 Z" fill="#c8c8c8"/><path d="M2 11 L5.5 14.5" stroke="#535353" stroke-width="1"/></svg>
<svg class="r" style="left:33.5px;top:273px;" width="3" height="3" viewBox="0 0 3 3"><path d="M3 0 V3 H0 Z" fill="#d0d0d0"/></svg>
<svg class="r" style="left:14.8px;top:284.5px;" width="16.5" height="15" viewBox="0 0 16.5 15"><rect x="0.7" y="0.7" width="15" height="13.6" fill="none" stroke="#c8c8c8" stroke-width="1.4"/><path d="M1 1 L15.5 14 M15.5 1 L1 14" stroke="#c8c8c8" stroke-width="1.3"/></svg>
<svg class="r" style="left:34px;top:297px;" width="3" height="3" viewBox="0 0 3 3"><path d="M3 0 V3 H0 Z" fill="#d0d0d0"/></svg>
<svg class="r" style="left:14.8px;top:309px;" width="16.5" height="14.5" viewBox="0 0 16.5 14.5"><rect x="0.7" y="0.7" width="15" height="13" fill="#676767" stroke="#c8c8c8" stroke-width="1.4"/></svg>
<svg class="r" style="left:34px;top:321px;" width="3" height="3" viewBox="0 0 3 3"><path d="M3 0 V3 H0 Z" fill="#d0d0d0"/></svg>
<div class="r" style="left:9px;top:329px;width:29px;height:1px;background:#4d4d4d;"></div>
<svg class="r" style="left:14px;top:334.4px;" width="18" height="16.5" viewBox="0 0 18 16.5"><circle cx="14.9" cy="3.4" r="2.7" fill="none" stroke="#c8c8c8" stroke-width="1.3"/><circle cx="14.9" cy="13.5" r="2.7" fill="none" stroke="#c8c8c8" stroke-width="1.3"/><path d="M0.8 4.2 L12.6 11.3 M0.8 12.7 L12.6 5.6" stroke="#c8c8c8" stroke-width="2" stroke-linecap="round"/></svg>
<svg class="r" style="left:14px;top:358.8px;" width="19" height="16" viewBox="0 0 19 16"><rect x="6" y="2.2" width="12.2" height="11.8" fill="none" stroke="#c8c8c8" stroke-width="1"/><path d="M5.2 1.2 h1.6 v1.6 h-1.6z M11.3 1.2 h1.6 v1.6 h-1.6z M17.4 1.2 h1.6 v1.6 h-1.6z M17.4 7.3 h1.6 v1.6 h-1.6z M17.4 13.2 h1.6 v1.6 h-1.6z M11.3 13.2 h1.6 v1.6 h-1.6z M5.2 13.2 h1.6 v1.6 h-1.6z" fill="#c8c8c8"/><path d="M0.2 0 V13.3 L10 8.8 Z" fill="#c8c8c8"/></svg>
<svg class="r" style="left:33.5px;top:374px;" width="3" height="3" viewBox="0 0 3 3"><path d="M3 0 V3 H0 Z" fill="#d0d0d0"/></svg>
<div class="r" style="left:14.8px;top:384px;width:16.4px;height:13.4px;background:linear-gradient(90deg,#4a4a4a,#b8b8b8);box-shadow:inset 0 0 0 1px #b0b0b0;"></div>
<div class="r" style="left:14.8px;top:407.8px;width:16.4px;height:13.4px;background:linear-gradient(180deg,#6a6a6a,#b8b8b8);box-shadow:inset 0 0 0 1px #b0b0b0;"></div>
<div class="r" style="left:9px;top:427.5px;width:29px;height:1.0px;background:#4d4d4d;"></div>
<svg class="r" style="left:16.3px;top:434.5px;" width="14" height="14.5" viewBox="0 0 14 14.5"><path d="M0.5 0.5 H13.5 V9.5 L9.5 13.5 H0.5 Z" fill="#c8c8c8"/><path d="M3 4 H11 M3 7 H11 M3 10 H7.5" stroke="#535353" stroke-width="1.2"/><path d="M9.5 13.5 V9.5 H13.5" fill="#535353"/></svg>
<svg class="r" style="left:14.9px;top:457.8px;" width="18" height="17.5" viewBox="0 0 18 17.5"><path d="M1.2 16.3 L2 13 L9 6 L11.5 8.5 L4.5 15.5 Z" fill="none" stroke="#c8c8c8" stroke-width="1.6"/><path d="M8.5 4 L13.5 9 M10.5 5 L14 1.5 L16 3.5 L12.5 7" fill="#c8c8c8" stroke="#c8c8c8" stroke-width="2"/><rect x="9" y="13" width="8" height="3" fill="none" stroke="#c8c8c8" stroke-width="1"/></svg>
<svg class="r" style="left:34px;top:471px;" width="3" height="3" viewBox="0 0 3 3"><path d="M3 0 V3 H0 Z" fill="#d0d0d0"/></svg>
<svg class="r" style="left:14.5px;top:482.5px;" width="17" height="16" viewBox="0 0 17 16"><path d="M4.5 15.5 L0.8 10 Q0.3 8.8 1.5 8.6 L4 10.5 V3 Q4 1.8 5 1.8 Q6 1.8 6 3 V8 V1.5 Q6 0.5 7.1 0.5 Q8.2 0.5 8.2 1.5 V8 V2 Q8.2 1 9.2 1 Q10.3 1 10.3 2 V8.5 V3.8 Q10.3 2.8 11.3 2.8 Q12.4 2.8 12.4 3.8 V10.5 Q12.4 13.5 10.5 15.5 Z" fill="#c8c8c8"/></svg>
<svg class="r" style="left:15.7px;top:506px;" width="16" height="17" viewBox="0 0 16 17"><circle cx="6" cy="6" r="4.8" fill="none" stroke="#c8c8c8" stroke-width="1.6"/><path d="M9.5 9.5 L15 15.5" stroke="#c8c8c8" stroke-width="2"/></svg>
<div class="r" style="left:9px;top:526px;width:29px;height:1px;background:#4d4d4d;"></div>
<svg class="r" style="left:8.6px;top:531.5px;" width="11" height="11" viewBox="0 0 11 11"><rect x="3.5" y="3.5" width="7" height="7" fill="none" stroke="#111" stroke-width="1.6"/><rect x="0.5" y="0.5" width="6.5" height="6.5" fill="#ffffff" stroke="#111" stroke-width="1"/><path d="M1 6.5 L6.5 1" stroke="#c41f2b" stroke-width="1"/></svg>
<svg class="r" style="left:27.4px;top:534px;" width="11" height="12" viewBox="0 0 11 12"><path d="M1 2 H8 V10 M6 8 L8 10.5 L10 8 M3 0 L1 2 L3 4" fill="none" stroke="#c8c8c8" stroke-width="1.3"/></svg>
<svg class="r" style="left:17.6px;top:557.3px;" width="18.5" height="19.2" viewBox="0 0 18.5 19.2"><rect width="18.5" height="19.2" fill="#ffffff"/><path d="M6 6 H13 V9 M9.5 6 V15" fill="none" stroke="#d8d8d8" stroke-width="1"/><path d="M0.8 18.5 L17.8 0.8" stroke="#c41f2b" stroke-width="2"/></svg>
<svg class="r" style="left:8.8px;top:549px;" width="19.4" height="18.4" viewBox="0 0 19.4 18.4"><rect width="19.4" height="18.4" fill="#ffffff"/><path d="M2.5 2.5 H16.9 V7.5 H14.6 V5.2 H11.6 V14.2 H13.6 V16.2 H5.8 V14.2 H7.8 V5.2 H4.8 V7.5 H2.5 Z" fill="#b81c2a"/></svg>
<svg class="r" style="left:12.5px;top:586.4px;" width="8" height="8" viewBox="0 0 8 8"><rect x="0.5" y="0.5" width="7" height="7" fill="none" stroke="#9a9a9a" stroke-width="1"/></svg>
<div class="r" style="left:25.5px;top:585px;width:12.899999999999999px;height:12px;background:#2c2c2c;border-radius:2px;"></div>
<svg class="r" style="left:27.5px;top:586.5px;" width="9" height="9" viewBox="0 0 9 9"><path d="M0.5 0.5 H8.5 V2.5 H7.5 V1.6 H5.2 V8 H6.3 V9 H2.7 V8 H3.8 V1.6 H1.5 V2.5 H0.5 Z" fill="#dddddd"/></svg>
<div class="r" style="left:8.6px;top:604px;width:28.6px;height:22.299999999999955px;background:#2c2c2c;border-radius:3px;"></div>
<div class="r" style="left:14.9px;top:608.7px;width:15.700000000000001px;height:13.699999999999932px;background:#e31c23;box-shadow:inset 0 0 0 1px #f04040;"></div>
<svg class="r" style="left:33px;top:621px;" width="3" height="3" viewBox="0 0 3 3"><path d="M3 0 V3 H0 Z" fill="#d0d0d0"/></svg>
<svg class="r" style="left:15.7px;top:637.3px;" width="16" height="13" viewBox="0 0 16 13"><path d="M1 4.5 V1 H4 M7 1 V3 M10 1 V3 M13 1 V3 M1 7.5 H3 M1 10.5 H3" stroke="#c8c8c8" stroke-width="1.1" fill="none"/><rect x="5" y="5" width="10" height="7" fill="#c8c8c8"/><path d="M5 8.5 H15" stroke="#9a9a9a" stroke-width="0.8"/></svg>
<svg class="r" style="left:34px;top:647px;" width="3" height="3" viewBox="0 0 3 3"><path d="M3 0 V3 H0 Z" fill="#d0d0d0"/></svg>
<div class="r" style="left:8.6px;top:660.8px;width:28.6px;height:20.40000000000009px;background:#2c2c2c;border-radius:3px;"></div>
<svg class="r" style="left:17.6px;top:665.5px;" width="12" height="12" viewBox="0 0 12 12"><rect x="0.6" y="0.6" width="10.8" height="10.8" fill="none" stroke="#c8c8c8" stroke-width="1.2"/><rect x="2.8" y="3" width="4.5" height="3.8" fill="none" stroke="#c8c8c8" stroke-width="1"/><rect x="4.8" y="5.2" width="4.5" height="3.8" fill="none" stroke="#c8c8c8" stroke-width="1"/></svg>
<svg class="r" style="left:33px;top:677px;" width="3" height="3" viewBox="0 0 3 3"><path d="M3 0 V3 H0 Z" fill="#d0d0d0"/></svg>
<svg class="r" style="left:101.75px;top:724.8px;" width="7.5" height="6" viewBox="0 0 7.5 6"><path d="M0.5 1 L3.75 5 L7.0 1" fill="none" stroke="#bdbdbd" stroke-width="1.1"/></svg>
<svg class="r" style="left:121.3px;top:723px;" width="9.5" height="9.5" viewBox="0 0 9.5 9.5"><rect x="0" y="0.5" width="2" height="8.5" fill="#8a8a8a"/><path d="M9 0.5 V9 L3 4.75 Z" fill="#8a8a8a"/></svg>
<svg class="r" style="left:143.3px;top:723px;" width="6.5" height="9.5" viewBox="0 0 6.5 9.5"><path d="M6 0.5 V9 L0.5 4.75 Z" fill="#8a8a8a"/></svg>
<div class="r" style="left:159.6px;top:719px;width:92.80000000000001px;height:15px;background:#5a5a5a;"></div>
<div class="t" style="left:166.00px;top:723.36px;font-size:9.2px;line-height:9.2px;color:#d0d0d0;font-weight:400;letter-spacing:0.000px;">1</div>
<svg class="r" style="left:238.75px;top:724.8px;" width="7.5" height="6" viewBox="0 0 7.5 6"><path d="M0.5 1 L3.75 5 L7.0 1" fill="none" stroke="#bdbdbd" stroke-width="1.1"/></svg>
<div class="r" style="left:252.4px;top:719px;width:47.599999999999994px;height:15px;background:#4e4e4e;"></div>
<svg class="r" style="left:265.2px;top:723px;" width="6" height="9.5" viewBox="0 0 6 9.5"><path d="M0.5 0.5 V9 L5.5 4.75 Z" fill="#8a8a8a"/></svg>
<svg class="r" style="left:283.3px;top:723px;" width="10" height="9.5" viewBox="0 0 10 9.5"><path d="M0.5 0.5 V9 L6.5 4.75 Z" fill="#8a8a8a"/><rect x="7.5" y="0.5" width="2" height="8.5" fill="#8a8a8a"/></svg>
<svg class="r" style="left:308.7px;top:721.8px;" width="18" height="12" viewBox="0 0 18 12"><path d="M1 11 V6 A5.5 5.5 0 0 1 12 6 V11 Z" fill="#9a9a9a"/><path d="M6.5 3 V6.5 H9" fill="none" stroke="#535353" stroke-width="1.3"/><circle cx="15.5" cy="10" r="1" fill="#9a9a9a"/></svg>
<div class="t" style="left:341.20px;top:722.88px;font-size:10px;line-height:10px;color:#d0d0d0;font-weight:400;letter-spacing:0.245px;">[Grundprofil] (Arb...</div>
<svg class="r" style="left:444.05px;top:724.3px;" width="7.5" height="6" viewBox="0 0 7.5 6"><path d="M0.5 1 L3.75 5 L7.0 1" fill="none" stroke="#bdbdbd" stroke-width="1.1"/></svg>
<div class="r" style="left:467.3px;top:722.2px;width:10px;height:10px;border-radius:50%;background:#3f8f3f;"></div>
<div class="t" style="left:483.10px;top:722.88px;font-size:10px;line-height:10px;color:#999999;font-weight:400;letter-spacing:-0.290px;">Ohne Fehler</div>
<svg class="r" style="left:556.25px;top:724.8px;" width="7.5" height="6" viewBox="0 0 7.5 6"><path d="M0.5 1 L3.75 5 L7.0 1" fill="none" stroke="#8a8a8a" stroke-width="1.1"/></svg>
<svg class="r" style="left:997.6px;top:721.8px;" width="14.5" height="10.5" viewBox="0 0 14.5 10.5"><rect x="0.6" y="0.6" width="13.3" height="9.3" fill="none" stroke="#c4c4c4" stroke-width="1.2"/><path d="M7.25 0.6 V10" stroke="#c4c4c4" stroke-width="1.2"/></svg>
<div class="r" style="left:508.3px;top:257.0px;width:50.6px;height:50.6px;border-radius:50%;background:#e5161e;"></div>
<svg class="r" style="left:515.1px;top:269.9px;" width="16" height="25.0" viewBox="0 0 16 25.0"><path d="M4.8 0 H12.3 V20.40 H15.8 V25.00 H0.2 V20.40 H4.8 V6.2 L0.6 8.6 V4.2 Z" fill="#ffffff"/></svg>
<div class="t" style="left:532.60px;top:264.58px;font-size:36.23px;line-height:36.23px;color:#ffffff;font-weight:700;letter-spacing:0.000px;">4</div>
<div class="r" style="left:1104.0px;top:256.7px;width:51.0px;height:51.0px;border-radius:50%;background:#e5161e;"></div>
<svg class="r" style="left:1110px;top:268.9px;" width="16" height="24.9" viewBox="0 0 16 24.9"><path d="M4.8 0 H12.3 V20.30 H15.8 V24.90 H0.2 V20.30 H4.8 V6.2 L0.6 8.6 V4.2 Z" fill="#ffffff"/></svg>
<div class="t" style="left:1129.50px;top:263.60px;font-size:36.09px;line-height:36.09px;color:#ffffff;font-weight:700;letter-spacing:0.000px;">6</div>
<div class="r" style="left:1082.2px;top:319.9px;width:51.0px;height:51.0px;border-radius:50%;background:#e5161e;"></div>
<svg class="r" style="left:1089.2px;top:332.8px;" width="16" height="25.2" viewBox="0 0 16 25.2"><path d="M4.8 0 H12.3 V20.60 H15.8 V25.20 H0.2 V20.60 H4.8 V6.2 L0.6 8.6 V4.2 Z" fill="#ffffff"/></svg>
<div class="t" style="left:1108.20px;top:327.44px;font-size:36.52px;line-height:36.52px;color:#ffffff;font-weight:700;letter-spacing:0.000px;">5</div>
</body></html>
